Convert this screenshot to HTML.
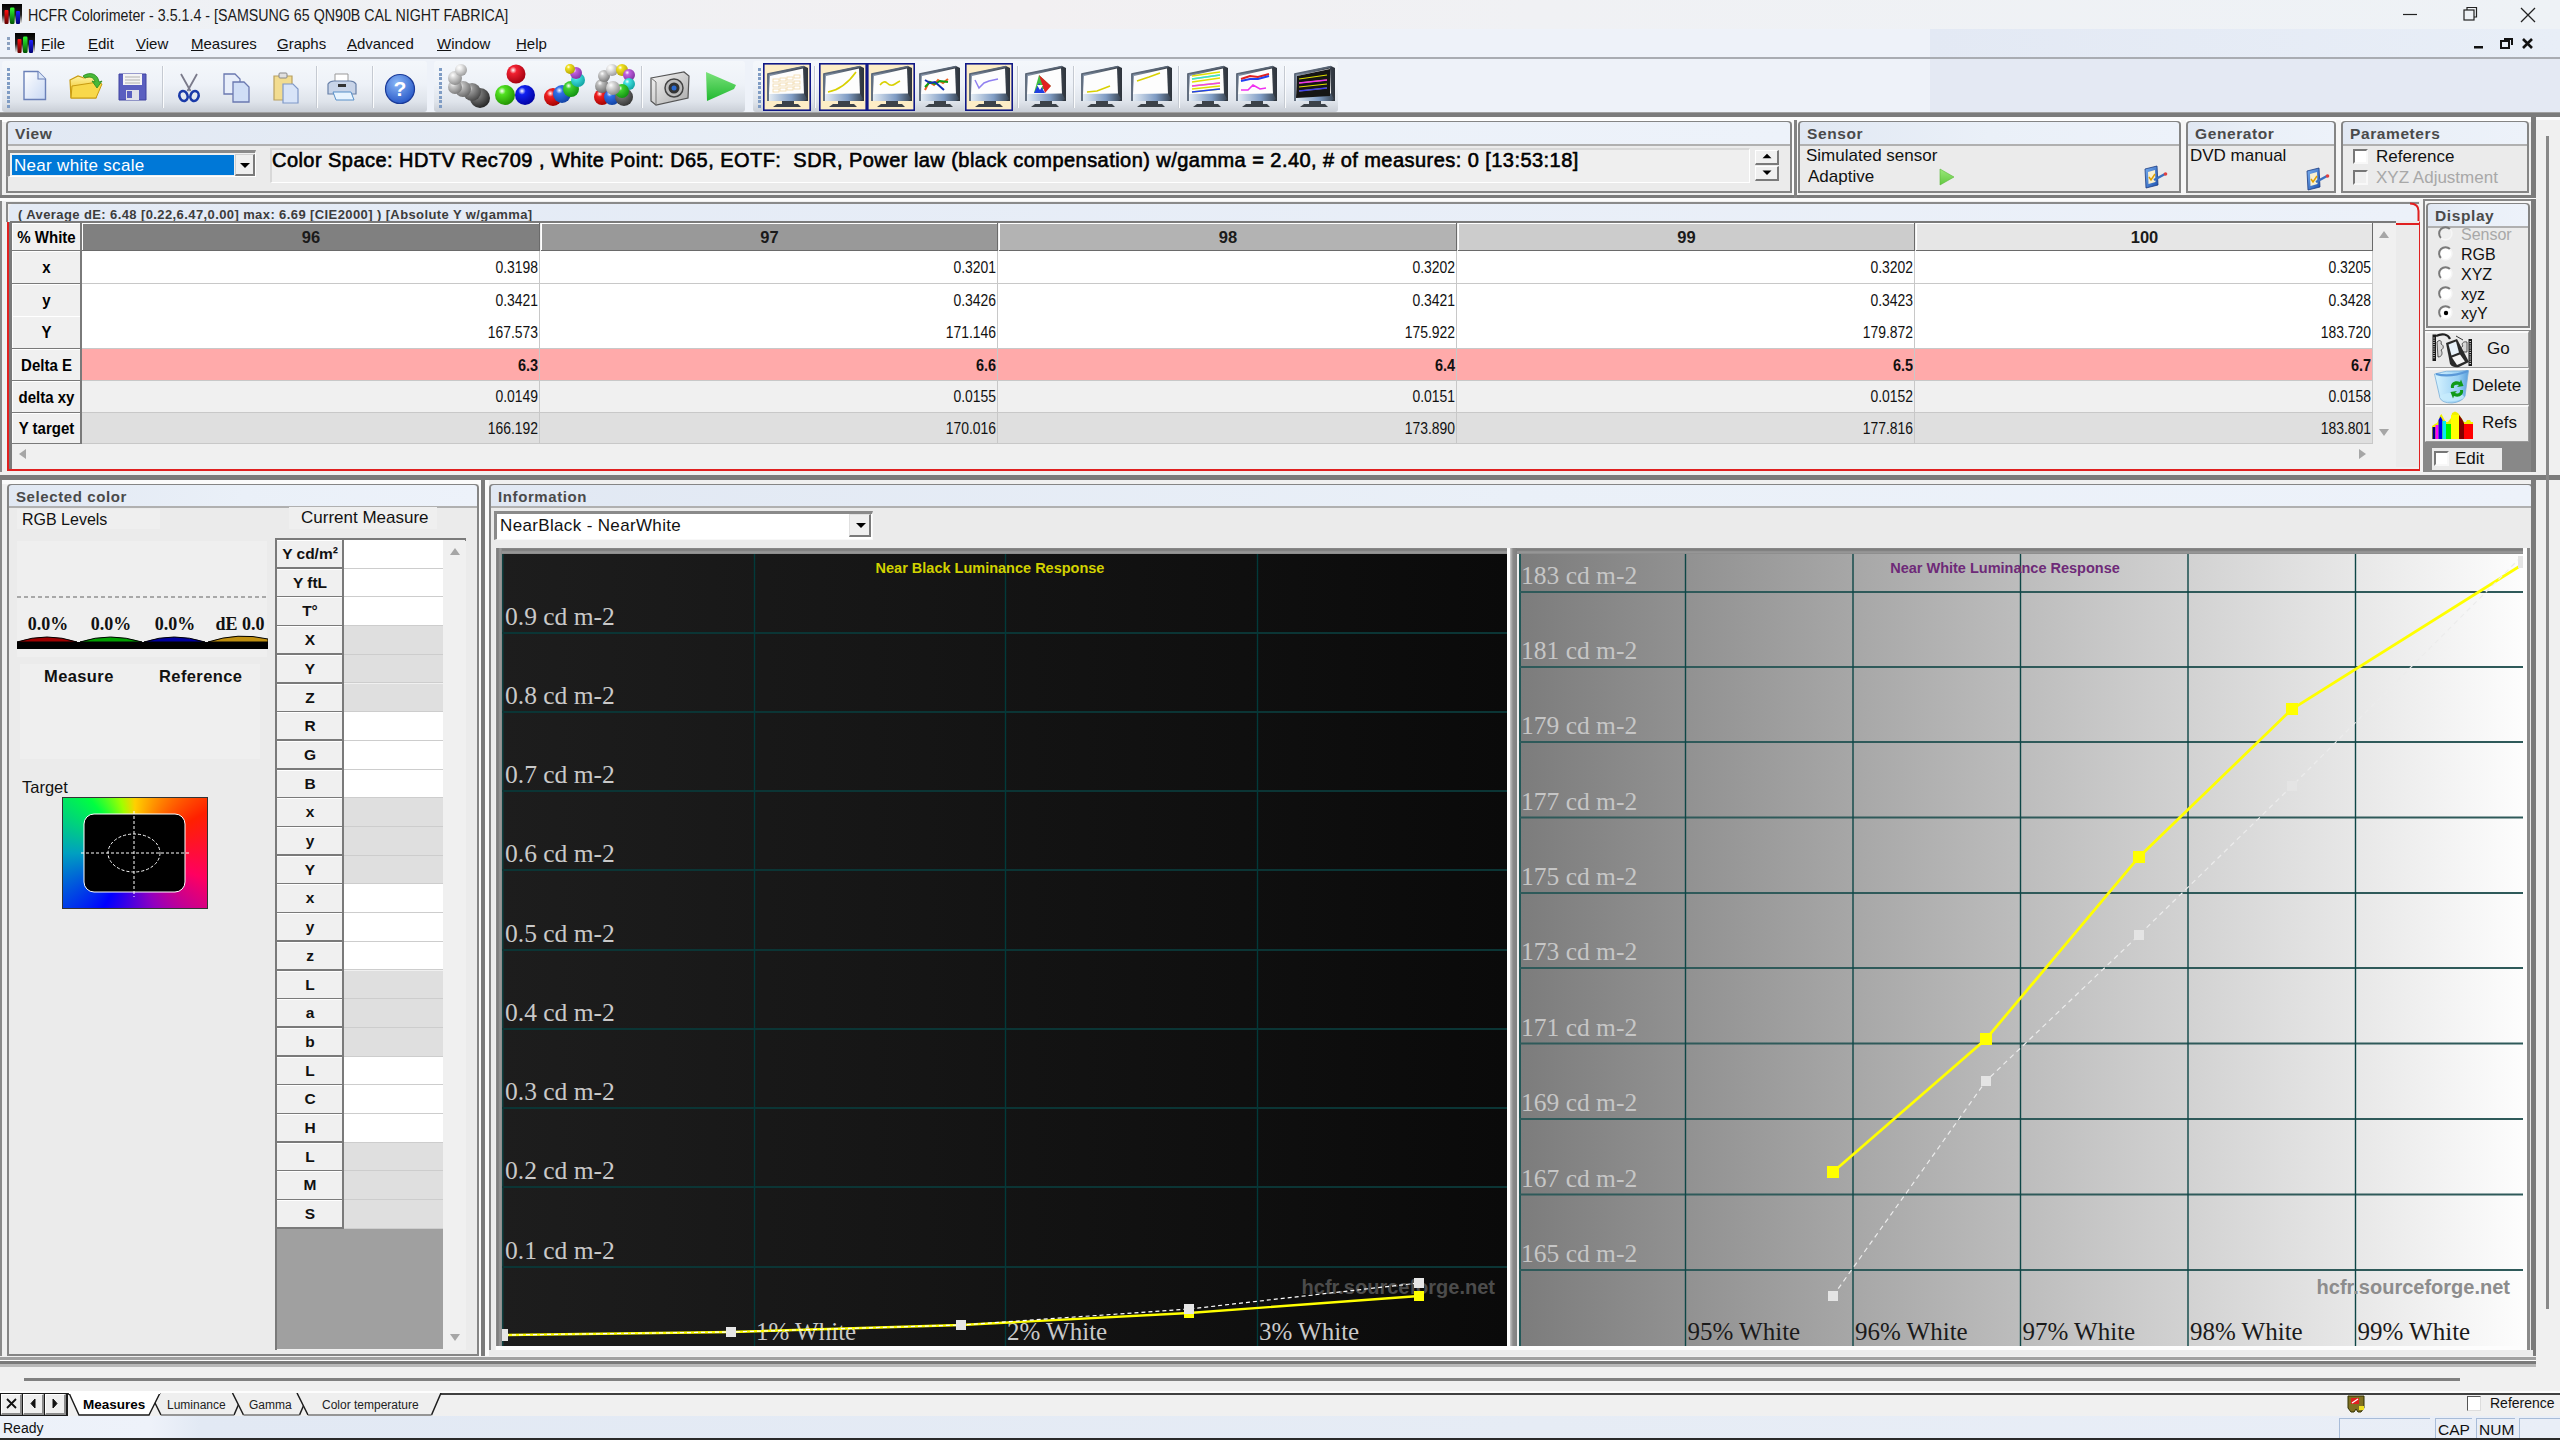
<!DOCTYPE html><html><head><meta charset="utf-8"><style>
html,body{margin:0;padding:0;width:2560px;height:1440px;overflow:hidden;background:#f0f0f0;}
body{position:relative;font-family:"Liberation Sans",sans-serif;}
div{position:absolute;box-sizing:border-box;}
.t{white-space:nowrap;line-height:1;}
.s{font-family:"Liberation Serif",serif;}
svg{position:absolute;}
</style></head><body>
<div style="left:0px;top:0px;width:2560px;height:29px;background:linear-gradient(90deg,#eef1f5 0%,#f2f0f2 40%,#f0f1f4 60%,#eef2f6 100%);"></div>
<div class="t" style="left:28px;top:8px;font-size:16px;color:#1a1a1a;transform:scaleX(0.89);transform-origin:0 0;">HCFR Colorimeter - 3.5.1.4 - [SAMSUNG 65 QN90B CAL NIGHT FABRICA]</div>
<svg style="left:2px;top:4px" width="20" height="20" viewBox="0 0 20 20"><defs><linearGradient id="ab2" x1="0" y1="0" x2="0" y2="1"><stop offset="0" stop-color="#000"/><stop offset="0.55" stop-color="#222"/><stop offset="1" stop-color="#fff"/></linearGradient><linearGradient id="ar2" x1="0" y1="0" x2="0" y2="1"><stop offset="0" stop-color="#ff1010"/><stop offset="1" stop-color="#600000"/></linearGradient><linearGradient id="agr2" x1="0" y1="0" x2="0" y2="1"><stop offset="0" stop-color="#30ff30"/><stop offset="1" stop-color="#005000"/></linearGradient><linearGradient id="abl2" x1="0" y1="0" x2="0" y2="1"><stop offset="0" stop-color="#2020ff"/><stop offset="1" stop-color="#000070"/></linearGradient></defs><rect x="0" y="0" width="20" height="20" fill="url(#ab2)"/><rect x="2.5" y="6" width="4" height="14" rx="1" fill="url(#ar2)"/><rect x="8" y="3.5" width="4.5" height="16.5" rx="1.2" fill="url(#agr2)"/><rect x="14" y="7" width="4" height="13" rx="1" fill="url(#abl2)"/></svg>
<svg style="left:2400px;top:6px" width="150" height="18"><line x1="3" y1="8.5" x2="17" y2="8.5" stroke="#222" stroke-width="1.2"/><rect x="64" y="4" width="10" height="10" fill="none" stroke="#222" stroke-width="1.2"/><path d="M67 4 V1.5 H76.5 V11 H74" fill="none" stroke="#222" stroke-width="1.2"/><path d="M121 2 L135 16 M135 2 L121 16" stroke="#222" stroke-width="1.3"/></svg>
<div style="left:0px;top:29px;width:2560px;height:28px;background:#eef2f9;"></div>
<div style="left:1930px;top:29px;width:630px;height:28px;background:linear-gradient(90deg,#e3e9f4,#e8eef7);"></div>
<div style="left:0px;top:57px;width:2560px;height:2px;background:#a9acb2;"></div>
<div style="left:7px;top:37px;width:3px;height:3px;background:#8aa0c0;"></div>
<div style="left:7px;top:42px;width:3px;height:3px;background:#8aa0c0;"></div>
<div style="left:7px;top:47px;width:3px;height:3px;background:#8aa0c0;"></div>
<svg style="left:15px;top:33px" width="20" height="20" viewBox="0 0 20 20"><defs><linearGradient id="ab15" x1="0" y1="0" x2="0" y2="1"><stop offset="0" stop-color="#000"/><stop offset="0.55" stop-color="#222"/><stop offset="1" stop-color="#fff"/></linearGradient><linearGradient id="ar15" x1="0" y1="0" x2="0" y2="1"><stop offset="0" stop-color="#ff1010"/><stop offset="1" stop-color="#600000"/></linearGradient><linearGradient id="agr15" x1="0" y1="0" x2="0" y2="1"><stop offset="0" stop-color="#30ff30"/><stop offset="1" stop-color="#005000"/></linearGradient><linearGradient id="abl15" x1="0" y1="0" x2="0" y2="1"><stop offset="0" stop-color="#2020ff"/><stop offset="1" stop-color="#000070"/></linearGradient></defs><rect x="0" y="0" width="20" height="20" fill="url(#ab15)"/><rect x="2.5" y="6" width="4" height="14" rx="1" fill="url(#ar15)"/><rect x="8" y="3.5" width="4.5" height="16.5" rx="1.2" fill="url(#agr15)"/><rect x="14" y="7" width="4" height="13" rx="1" fill="url(#abl15)"/></svg>
<div class="t" style="left:41px;top:36px;font-size:15px;color:#111;"><u>F</u>ile</div>
<div class="t" style="left:88px;top:36px;font-size:15px;color:#111;"><u>E</u>dit</div>
<div class="t" style="left:136px;top:36px;font-size:15px;color:#111;"><u>V</u>iew</div>
<div class="t" style="left:191px;top:36px;font-size:15px;color:#111;"><u>M</u>easures</div>
<div class="t" style="left:277px;top:36px;font-size:15px;color:#111;"><u>G</u>raphs</div>
<div class="t" style="left:347px;top:36px;font-size:15px;color:#111;"><u>A</u>dvanced</div>
<div class="t" style="left:437px;top:36px;font-size:15px;color:#111;"><u>W</u>indow</div>
<div class="t" style="left:516px;top:36px;font-size:15px;color:#111;"><u>H</u>elp</div>
<svg style="left:2468px;top:36px" width="70" height="16"><rect x="6" y="10" width="9" height="2.5" fill="#111"/><rect x="33" y="5" width="8" height="7" fill="none" stroke="#111" stroke-width="2"/><path d="M36 3 H44 V9" fill="none" stroke="#111" stroke-width="2"/><path d="M55 3 L64 12 M64 3 L55 12" stroke="#111" stroke-width="2.6"/></svg>
<div style="left:0px;top:59px;width:2560px;height:54px;background:linear-gradient(180deg,#f3f6fb 0%,#eef2f8 50%,#dde2ea 85%,#cfd4dc 100%);"></div>
<div style="left:1930px;top:59px;width:630px;height:54px;background:#e6ebf4;"></div>
<div style="left:0px;top:113px;width:2560px;height:4px;background:#7d7d7d;"></div>
<div style="left:0px;top:117px;width:2560px;height:3px;background:#fdfdfd;"></div>
<div style="left:0px;top:59px;width:2560px;height:54px;background:#eef2f9;"></div>
<div style="left:1930px;top:59px;width:630px;height:54px;background:#e4e9f3;"></div>
<div style="left:2px;top:61px;width:425px;height:51px;background:linear-gradient(180deg,#f4f7fb 0%,#eef2f8 45%,#dfe4eb 80%,#c9ced6 100%);border-radius:3px;"></div>
<div style="left:434px;top:61px;width:311px;height:51px;background:linear-gradient(180deg,#f4f7fb 0%,#eef2f8 45%,#dfe4eb 80%,#c9ced6 100%);border-radius:3px;"></div>
<div style="left:753px;top:61px;width:585px;height:51px;background:linear-gradient(180deg,#f4f7fb 0%,#eef2f8 45%,#dfe4eb 80%,#c9ced6 100%);border-radius:3px;"></div>
<div style="left:7px;top:68.0px;width:3px;height:3px;background:#7f9cc4;"></div>
<div style="left:7px;top:72.6px;width:3px;height:3px;background:#7f9cc4;"></div>
<div style="left:7px;top:77.2px;width:3px;height:3px;background:#7f9cc4;"></div>
<div style="left:7px;top:81.8px;width:3px;height:3px;background:#7f9cc4;"></div>
<div style="left:7px;top:86.4px;width:3px;height:3px;background:#7f9cc4;"></div>
<div style="left:7px;top:91.0px;width:3px;height:3px;background:#7f9cc4;"></div>
<div style="left:7px;top:95.6px;width:3px;height:3px;background:#7f9cc4;"></div>
<div style="left:7px;top:100.19999999999999px;width:3px;height:3px;background:#7f9cc4;"></div>
<div style="left:7px;top:104.8px;width:3px;height:3px;background:#7f9cc4;"></div>
<div style="left:439px;top:68.0px;width:3px;height:3px;background:#7f9cc4;"></div>
<div style="left:439px;top:72.6px;width:3px;height:3px;background:#7f9cc4;"></div>
<div style="left:439px;top:77.2px;width:3px;height:3px;background:#7f9cc4;"></div>
<div style="left:439px;top:81.8px;width:3px;height:3px;background:#7f9cc4;"></div>
<div style="left:439px;top:86.4px;width:3px;height:3px;background:#7f9cc4;"></div>
<div style="left:439px;top:91.0px;width:3px;height:3px;background:#7f9cc4;"></div>
<div style="left:439px;top:95.6px;width:3px;height:3px;background:#7f9cc4;"></div>
<div style="left:439px;top:100.19999999999999px;width:3px;height:3px;background:#7f9cc4;"></div>
<div style="left:439px;top:104.8px;width:3px;height:3px;background:#7f9cc4;"></div>
<div style="left:758px;top:68.0px;width:3px;height:3px;background:#7f9cc4;"></div>
<div style="left:758px;top:72.6px;width:3px;height:3px;background:#7f9cc4;"></div>
<div style="left:758px;top:77.2px;width:3px;height:3px;background:#7f9cc4;"></div>
<div style="left:758px;top:81.8px;width:3px;height:3px;background:#7f9cc4;"></div>
<div style="left:758px;top:86.4px;width:3px;height:3px;background:#7f9cc4;"></div>
<div style="left:758px;top:91.0px;width:3px;height:3px;background:#7f9cc4;"></div>
<div style="left:758px;top:95.6px;width:3px;height:3px;background:#7f9cc4;"></div>
<div style="left:758px;top:100.19999999999999px;width:3px;height:3px;background:#7f9cc4;"></div>
<div style="left:758px;top:104.8px;width:3px;height:3px;background:#7f9cc4;"></div>
<div style="left:162px;top:66px;width:1px;height:42px;background:#c5cad2;"></div>
<div style="left:163px;top:66px;width:1px;height:42px;background:#fbfcfd;"></div>
<div style="left:316px;top:66px;width:1px;height:42px;background:#c5cad2;"></div>
<div style="left:317px;top:66px;width:1px;height:42px;background:#fbfcfd;"></div>
<div style="left:372px;top:66px;width:1px;height:42px;background:#c5cad2;"></div>
<div style="left:373px;top:66px;width:1px;height:42px;background:#fbfcfd;"></div>
<div style="left:641px;top:66px;width:1px;height:42px;background:#c5cad2;"></div>
<div style="left:642px;top:66px;width:1px;height:42px;background:#fbfcfd;"></div>
<div style="left:814px;top:66px;width:1px;height:42px;background:#c5cad2;"></div>
<div style="left:815px;top:66px;width:1px;height:42px;background:#fbfcfd;"></div>
<div style="left:1017px;top:66px;width:1px;height:42px;background:#c5cad2;"></div>
<div style="left:1018px;top:66px;width:1px;height:42px;background:#fbfcfd;"></div>
<div style="left:1073px;top:66px;width:1px;height:42px;background:#c5cad2;"></div>
<div style="left:1074px;top:66px;width:1px;height:42px;background:#fbfcfd;"></div>
<div style="left:1178px;top:66px;width:1px;height:42px;background:#c5cad2;"></div>
<div style="left:1179px;top:66px;width:1px;height:42px;background:#fbfcfd;"></div>
<div style="left:1284px;top:66px;width:1px;height:42px;background:#c5cad2;"></div>
<div style="left:1285px;top:66px;width:1px;height:42px;background:#fbfcfd;"></div>
<div style="left:0px;top:112px;width:2560px;height:1px;background:#a0a0a0;"></div>
<div style="left:0px;top:113px;width:2560px;height:4px;background:#7b7b7b;"></div>
<div style="left:0px;top:117px;width:2560px;height:3px;background:#fcfcfc;"></div>
<svg style="left:22px;top:70px" width="26" height="32" viewBox="0 0 26 32"><defs><linearGradient id="nd" x1="0" y1="0" x2="1" y2="1"><stop offset="0" stop-color="#fff"/><stop offset="1" stop-color="#c8d8f4"/></linearGradient></defs><path d="M2 1.5 H16 L23.5 9 V29.5 H2 Z" fill="url(#nd)" stroke="#6a80b8" stroke-width="1.4"/><path d="M16 1.5 V9 H23.5" fill="#dde8f8" stroke="#6a80b8" stroke-width="1.1"/></svg>
<svg style="left:68px;top:72px" width="36" height="30" viewBox="0 0 36 30"><defs><linearGradient id="of" x1="0" y1="0" x2="0" y2="1"><stop offset="0" stop-color="#fff3a0"/><stop offset="1" stop-color="#e8b400"/></linearGradient></defs><path d="M2 8 L10 4 L16 6 L26 4 L30 10 L28 26 L3 26 Z" fill="url(#of)" stroke="#c89a10" stroke-width="1.2"/><path d="M4 14 L30 10 L34 12 L28 26 L3 26 Z" fill="#f8d84a" stroke="#c89a10" stroke-width="1"/><path d="M15 4 C22 -1 30 2 31 10 L34 9 L29 16 L24 9 L27 10 C26 5 21 4 17 6 Z" fill="#48b838" stroke="#2a8a20" stroke-width="0.8"/></svg>
<svg style="left:118px;top:72px" width="30" height="30" viewBox="0 0 30 30"><path d="M1 2 H28 V28 H1 Z" fill="#5a5fc0" stroke="#3e43a0" stroke-width="1"/><rect x="5" y="2" width="19" height="11" fill="#f4f4f4"/><path d="M7 5 H22 M7 8 H22 M7 11 H22" stroke="#b0b0b0" stroke-width="1"/><rect x="8" y="18" width="13" height="10" fill="#e0e0e8"/><rect x="9" y="19" width="5" height="7" fill="#5a5fc0"/></svg>
<svg style="left:175px;top:73px" width="28" height="30" viewBox="0 0 28 30"><path d="M6 1 L15.5 18 M22 1 L12.5 18" stroke="#7a7a8a" stroke-width="1.8"/><ellipse cx="8.5" cy="23" rx="4" ry="5" fill="none" stroke="#1a3aa8" stroke-width="2.6" transform="rotate(-20 8.5 23)"/><ellipse cx="19.5" cy="23" rx="4" ry="5" fill="none" stroke="#1a3aa8" stroke-width="2.6" transform="rotate(20 19.5 23)"/></svg>
<svg style="left:222px;top:72px" width="30" height="32" viewBox="0 0 30 32"><path d="M2 2 H13 L18 7 V22 H2 Z" fill="#e8eefa" stroke="#6a78b0" stroke-width="1.3"/><path d="M11 10 H22 L27 15 V30 H11 Z" fill="#d0def6" stroke="#6a78b0" stroke-width="1.3"/></svg>
<svg style="left:271px;top:72px" width="30" height="32" viewBox="0 0 30 32"><path d="M3 4 H21 V28 H3 Z" fill="#f2dc90" stroke="#b8a060" stroke-width="1.2"/><rect x="8" y="1" width="8" height="5" rx="1" fill="#e0e0e0" stroke="#888" stroke-width="1"/><path d="M12 12 H22 L27 17 V31 H12 Z" fill="#d8e4f8" stroke="#7f98c8" stroke-width="1.2"/></svg>
<svg style="left:326px;top:72px" width="32" height="30" viewBox="0 0 32 30"><path d="M9 2 H22 V10 H9 Z" fill="#fff" stroke="#999" stroke-width="1"/><path d="M2 12 Q4 9 8 9 H24 Q28 9 30 12 V22 H2 Z" fill="#c8d4e8" stroke="#6880a8" stroke-width="1.2"/><rect x="12" y="12" width="8" height="3" fill="#333"/><path d="M7 20 H25 L28 28 H10 Z" fill="#e8f4ff" stroke="#5890c8" stroke-width="1"/></svg>
<svg style="left:384px;top:73px" width="32" height="32" viewBox="0 0 32 32"><defs><radialGradient id="hp" cx="0.4" cy="0.3" r="0.7"><stop offset="0" stop-color="#8ab8f8"/><stop offset="1" stop-color="#2a5ac8"/></radialGradient></defs><circle cx="16" cy="16" r="14.5" fill="url(#hp)" stroke="#1a3a98" stroke-width="1.2"/><text x="16" y="23" font-family="Liberation Sans" font-weight="bold" font-size="21" fill="#fff" text-anchor="middle">?</text></svg>
<svg style="left:445px;top:64px" width="48" height="46" viewBox="0 0 48 46"><defs><radialGradient id="g1" cx="0.35" cy="0.3" r="0.75"><stop offset="0" stop-color="#fff"/><stop offset="0.25" stop-color="#777"/><stop offset="1" stop-color="#222"/></radialGradient></defs><circle cx="35" cy="34" r="10" fill="url(#g1)"/><defs><radialGradient id="g2" cx="0.35" cy="0.3" r="0.75"><stop offset="0" stop-color="#fff"/><stop offset="0.25" stop-color="#999"/><stop offset="1" stop-color="#444"/></radialGradient></defs><circle cx="27" cy="28" r="9" fill="url(#g2)"/><defs><radialGradient id="g3" cx="0.35" cy="0.3" r="0.75"><stop offset="0" stop-color="#fff"/><stop offset="0.25" stop-color="#bbb"/><stop offset="1" stop-color="#666"/></radialGradient></defs><circle cx="18" cy="25" r="8" fill="url(#g3)"/><defs><radialGradient id="g4" cx="0.35" cy="0.3" r="0.75"><stop offset="0" stop-color="#fff"/><stop offset="0.25" stop-color="#ccc"/><stop offset="1" stop-color="#777"/></radialGradient></defs><circle cx="10" cy="23" r="7" fill="url(#g4)"/><defs><radialGradient id="g5" cx="0.35" cy="0.3" r="0.75"><stop offset="0" stop-color="#fff"/><stop offset="0.25" stop-color="#ddd"/><stop offset="1" stop-color="#888"/></radialGradient></defs><circle cx="10" cy="14" r="7" fill="url(#g5)"/><defs><radialGradient id="g6" cx="0.35" cy="0.3" r="0.75"><stop offset="0" stop-color="#fff"/><stop offset="0.25" stop-color="#eee"/><stop offset="1" stop-color="#999"/></radialGradient></defs><circle cx="16" cy="6" r="6" fill="url(#g6)"/></svg>
<svg style="left:494px;top:64px" width="44" height="46" viewBox="0 0 44 46"><defs><radialGradient id="r1" cx="0.35" cy="0.3" r="0.75"><stop offset="0" stop-color="#fff"/><stop offset="0.25" stop-color="#f02030"/><stop offset="1" stop-color="#a00010"/></radialGradient></defs><circle cx="22" cy="10" r="9.5" fill="url(#r1)"/><defs><radialGradient id="gr1" cx="0.35" cy="0.3" r="0.75"><stop offset="0" stop-color="#fff"/><stop offset="0.25" stop-color="#50e020"/><stop offset="1" stop-color="#209000"/></radialGradient></defs><circle cx="11" cy="31" r="10" fill="url(#gr1)"/><defs><radialGradient id="b1" cx="0.35" cy="0.3" r="0.75"><stop offset="0" stop-color="#fff"/><stop offset="0.25" stop-color="#1020f0"/><stop offset="1" stop-color="#0000a0"/></radialGradient></defs><circle cx="31" cy="31" r="10" fill="url(#b1)"/></svg>
<svg style="left:543px;top:64px" width="44" height="46" viewBox="0 0 44 46"><defs><radialGradient id="c1" cx="0.35" cy="0.3" r="0.75"><stop offset="0" stop-color="#fff"/><stop offset="0.25" stop-color="#f02020"/><stop offset="1" stop-color="#a00000"/></radialGradient></defs><circle cx="10" cy="33" r="9" fill="url(#c1)"/><defs><radialGradient id="c2" cx="0.35" cy="0.3" r="0.75"><stop offset="0" stop-color="#fff"/><stop offset="0.25" stop-color="#3070e8"/><stop offset="1" stop-color="#1040a0"/></radialGradient></defs><circle cx="19" cy="30" r="9" fill="url(#c2)"/><defs><radialGradient id="c3" cx="0.35" cy="0.3" r="0.75"><stop offset="0" stop-color="#fff"/><stop offset="0.25" stop-color="#40d030"/><stop offset="1" stop-color="#109010"/></radialGradient></defs><circle cx="28" cy="25" r="8" fill="url(#c3)"/><defs><radialGradient id="c4" cx="0.35" cy="0.3" r="0.75"><stop offset="0" stop-color="#fff"/><stop offset="0.25" stop-color="#40e0e0"/><stop offset="1" stop-color="#10a0a0"/></radialGradient></defs><circle cx="35" cy="16" r="7" fill="url(#c4)"/><defs><radialGradient id="c5" cx="0.35" cy="0.3" r="0.75"><stop offset="0" stop-color="#fff"/><stop offset="0.25" stop-color="#c060e0"/><stop offset="1" stop-color="#8030a0"/></radialGradient></defs><circle cx="33" cy="9" r="6" fill="url(#c5)"/><defs><radialGradient id="c6" cx="0.35" cy="0.3" r="0.75"><stop offset="0" stop-color="#fff"/><stop offset="0.25" stop-color="#f0e020"/><stop offset="1" stop-color="#b0a000"/></radialGradient></defs><circle cx="27" cy="5" r="5" fill="url(#c6)"/></svg>
<svg style="left:592px;top:64px" width="46" height="46" viewBox="0 0 46 46"><defs><radialGradient id="d1" cx="0.35" cy="0.3" r="0.75"><stop offset="0" stop-color="#fff"/><stop offset="0.25" stop-color="#f02020"/><stop offset="1" stop-color="#a00000"/></radialGradient></defs><circle cx="10" cy="33" r="8" fill="url(#d1)"/><defs><radialGradient id="d2" cx="0.35" cy="0.3" r="0.75"><stop offset="0" stop-color="#fff"/><stop offset="0.25" stop-color="#3070e8"/><stop offset="1" stop-color="#1040a0"/></radialGradient></defs><circle cx="20" cy="33" r="8" fill="url(#d2)"/><defs><radialGradient id="d3" cx="0.35" cy="0.3" r="0.75"><stop offset="0" stop-color="#fff"/><stop offset="0.25" stop-color="#777"/><stop offset="1" stop-color="#333"/></radialGradient></defs><circle cx="32" cy="33" r="9" fill="url(#d3)"/><defs><radialGradient id="d4" cx="0.35" cy="0.3" r="0.75"><stop offset="0" stop-color="#fff"/><stop offset="0.25" stop-color="#bbb"/><stop offset="1" stop-color="#666"/></radialGradient></defs><circle cx="10" cy="22" r="7" fill="url(#d4)"/><defs><radialGradient id="d5" cx="0.35" cy="0.3" r="0.75"><stop offset="0" stop-color="#fff"/><stop offset="0.25" stop-color="#ccc"/><stop offset="1" stop-color="#777"/></radialGradient></defs><circle cx="12" cy="12" r="6" fill="url(#d5)"/><defs><radialGradient id="d6" cx="0.35" cy="0.3" r="0.75"><stop offset="0" stop-color="#fff"/><stop offset="0.25" stop-color="#eee"/><stop offset="1" stop-color="#999"/></radialGradient></defs><circle cx="20" cy="6" r="6" fill="url(#d6)"/><defs><radialGradient id="d7" cx="0.35" cy="0.3" r="0.75"><stop offset="0" stop-color="#fff"/><stop offset="0.25" stop-color="#f0e020"/><stop offset="1" stop-color="#b0a000"/></radialGradient></defs><circle cx="30" cy="6" r="6" fill="url(#d7)"/><defs><radialGradient id="d8" cx="0.35" cy="0.3" r="0.75"><stop offset="0" stop-color="#fff"/><stop offset="0.25" stop-color="#c060e0"/><stop offset="1" stop-color="#8030a0"/></radialGradient></defs><circle cx="37" cy="11" r="6" fill="url(#d8)"/><defs><radialGradient id="d9" cx="0.35" cy="0.3" r="0.75"><stop offset="0" stop-color="#fff"/><stop offset="0.25" stop-color="#40e0e0"/><stop offset="1" stop-color="#10a0a0"/></radialGradient></defs><circle cx="37" cy="20" r="6" fill="url(#d9)"/><defs><radialGradient id="d10" cx="0.35" cy="0.3" r="0.75"><stop offset="0" stop-color="#fff"/><stop offset="0.25" stop-color="#40d030"/><stop offset="1" stop-color="#109010"/></radialGradient></defs><circle cx="30" cy="27" r="7" fill="url(#d10)"/><defs><radialGradient id="d11" cx="0.35" cy="0.3" r="0.75"><stop offset="0" stop-color="#fff"/><stop offset="0.25" stop-color="#ddd"/><stop offset="1" stop-color="#888"/></radialGradient></defs><circle cx="21" cy="24" r="7" fill="url(#d11)"/></svg>
<svg style="left:648px;top:66px" width="44" height="42" viewBox="0 0 44 42"><defs><linearGradient id="cam" x1="0" y1="0" x2="1" y2="1"><stop offset="0" stop-color="#f8f8f8"/><stop offset="1" stop-color="#a8a8a8"/></linearGradient></defs><path d="M3 12 L36 6 L41 10 L40 32 L8 39 L3 35 Z" fill="url(#cam)" stroke="#555" stroke-width="1.2"/><path d="M3 12 L8 16 L8 39" fill="none" stroke="#777" stroke-width="1"/><circle cx="26" cy="22" r="9" fill="#bbb" stroke="#444" stroke-width="1.5"/><circle cx="26" cy="22" r="5.5" fill="#333"/><circle cx="26" cy="22" r="2.5" fill="#2a6ad0"/></svg>
<svg style="left:704px;top:70px" width="34" height="34" viewBox="0 0 34 34"><defs><linearGradient id="pl" x1="0" y1="0" x2="0" y2="1"><stop offset="0" stop-color="#7ae27a"/><stop offset="1" stop-color="#20b830"/></linearGradient></defs><path d="M2 2 L32 15 L30 19 L3 31 Z" fill="url(#pl)"/></svg>
<svg style="left:763px;top:63px" width="48" height="48" viewBox="0 0 48 48"><rect x="0.8" y="0.8" width="46.4" height="46.4" fill="#fdedc6" stroke="#101888" stroke-width="1.6"/><defs><linearGradient id="mba" x1="0" y1="0" x2="1" y2="0"><stop offset="0" stop-color="#e4ecf4"/><stop offset="0.6" stop-color="#7f9cc4"/><stop offset="1" stop-color="#3a4654"/></linearGradient><linearGradient id="msa" x1="0" y1="0" x2="1" y2="0"><stop offset="0" stop-color="#8a9ab0"/><stop offset="1" stop-color="#2e343c"/></linearGradient></defs><path d="M4 38 L4 11 L41 3 L45 5 L45 38 Z" fill="url(#msa)"/><path d="M7 13 L40 5.5 L41 31 L6 31 Z" fill="#fdfdfd"/><path d="M5 38 L5 11 L41 3.5" fill="none" stroke="#5a6676" stroke-width="1.6"/><path d="M6 31 L41 30.5 L44 36 L41 38 L6 38 Z" fill="url(#mba)"/><rect x="19" y="38" width="12" height="3" fill="#3c4249"/><path d="M10 44 L14 41 L35 41 L38 44 Z" fill="#3c4249"/><g fill="#fff" stroke="#f0d8a8" stroke-width="0.8"><rect x="10" y="16" width="6" height="3"/><rect x="17" y="15" width="6" height="3"/><rect x="24" y="14" width="6" height="3"/><rect x="31" y="12" width="6" height="3"/><rect x="10" y="21" width="6" height="3"/><rect x="17" y="20" width="6" height="3"/><rect x="24" y="19" width="6" height="3"/><rect x="31" y="18" width="6" height="3"/><rect x="10" y="26" width="6" height="3"/><rect x="17" y="25" width="6" height="3"/><rect x="24" y="24" width="6" height="3"/><rect x="31" y="23" width="6" height="3"/></g></svg>
<svg style="left:819px;top:63px" width="48" height="48" viewBox="0 0 48 48"><rect x="0.8" y="0.8" width="46.4" height="46.4" fill="#fdedc6" stroke="#101888" stroke-width="1.6"/><defs><linearGradient id="mbb" x1="0" y1="0" x2="1" y2="0"><stop offset="0" stop-color="#e4ecf4"/><stop offset="0.6" stop-color="#7f9cc4"/><stop offset="1" stop-color="#3a4654"/></linearGradient><linearGradient id="msb" x1="0" y1="0" x2="1" y2="0"><stop offset="0" stop-color="#8a9ab0"/><stop offset="1" stop-color="#2e343c"/></linearGradient></defs><path d="M4 38 L4 11 L41 3 L45 5 L45 38 Z" fill="url(#msb)"/><path d="M7 13 L40 5.5 L41 31 L6 31 Z" fill="#fdfdfd"/><path d="M5 38 L5 11 L41 3.5" fill="none" stroke="#5a6676" stroke-width="1.6"/><path d="M6 31 L41 30.5 L44 36 L41 38 L6 38 Z" fill="url(#mbb)"/><rect x="19" y="38" width="12" height="3" fill="#3c4249"/><path d="M10 44 L14 41 L35 41 L38 44 Z" fill="#3c4249"/><path d="M9 29 Q25 26 37 9" fill="none" stroke="#d8d000" stroke-width="1.6"/></svg>
<svg style="left:867px;top:63px" width="48" height="48" viewBox="0 0 48 48"><rect x="0.8" y="0.8" width="46.4" height="46.4" fill="#fdedc6" stroke="#101888" stroke-width="1.6"/><defs><linearGradient id="mbc" x1="0" y1="0" x2="1" y2="0"><stop offset="0" stop-color="#e4ecf4"/><stop offset="0.6" stop-color="#7f9cc4"/><stop offset="1" stop-color="#3a4654"/></linearGradient><linearGradient id="msc" x1="0" y1="0" x2="1" y2="0"><stop offset="0" stop-color="#8a9ab0"/><stop offset="1" stop-color="#2e343c"/></linearGradient></defs><path d="M4 38 L4 11 L41 3 L45 5 L45 38 Z" fill="url(#msc)"/><path d="M7 13 L40 5.5 L41 31 L6 31 Z" fill="#fdfdfd"/><path d="M5 38 L5 11 L41 3.5" fill="none" stroke="#5a6676" stroke-width="1.6"/><path d="M6 31 L41 30.5 L44 36 L41 38 L6 38 Z" fill="url(#mbc)"/><rect x="19" y="38" width="12" height="3" fill="#3c4249"/><path d="M10 44 L14 41 L35 41 L38 44 Z" fill="#3c4249"/><path d="M13 22 Q17 17 20 20 Q24 24 28 21 Q31 19 33 18" fill="none" stroke="#d8d000" stroke-width="1.6"/></svg>
<svg style="left:915px;top:63px" width="48" height="48" viewBox="0 0 48 48"><defs><linearGradient id="mbd" x1="0" y1="0" x2="1" y2="0"><stop offset="0" stop-color="#e4ecf4"/><stop offset="0.6" stop-color="#7f9cc4"/><stop offset="1" stop-color="#3a4654"/></linearGradient><linearGradient id="msd" x1="0" y1="0" x2="1" y2="0"><stop offset="0" stop-color="#8a9ab0"/><stop offset="1" stop-color="#2e343c"/></linearGradient></defs><path d="M4 38 L4 11 L41 3 L45 5 L45 38 Z" fill="url(#msd)"/><path d="M7 13 L40 5.5 L41 31 L6 31 Z" fill="#fdfdfd"/><path d="M5 38 L5 11 L41 3.5" fill="none" stroke="#5a6676" stroke-width="1.6"/><path d="M6 31 L41 30.5 L44 36 L41 38 L6 38 Z" fill="url(#mbd)"/><rect x="19" y="38" width="12" height="3" fill="#3c4249"/><path d="M10 44 L14 41 L35 41 L38 44 Z" fill="#3c4249"/><path d="M10 27 L14 19 L19 22 L23 17 L28 20 L33 16" fill="none" stroke="#f06020" stroke-width="2"/><path d="M10 24 L15 19 L20 21 L25 18 L33 19" fill="none" stroke="#10a010" stroke-width="2"/><path d="M10 17 L15 20 L20 19 L29 27" fill="none" stroke="#1030b0" stroke-width="2"/></svg>
<svg style="left:965px;top:63px" width="48" height="48" viewBox="0 0 48 48"><rect x="0.8" y="0.8" width="46.4" height="46.4" fill="#fdedc6" stroke="#101888" stroke-width="1.6"/><defs><linearGradient id="mbe" x1="0" y1="0" x2="1" y2="0"><stop offset="0" stop-color="#e4ecf4"/><stop offset="0.6" stop-color="#7f9cc4"/><stop offset="1" stop-color="#3a4654"/></linearGradient><linearGradient id="mse" x1="0" y1="0" x2="1" y2="0"><stop offset="0" stop-color="#8a9ab0"/><stop offset="1" stop-color="#2e343c"/></linearGradient></defs><path d="M4 38 L4 11 L41 3 L45 5 L45 38 Z" fill="url(#mse)"/><path d="M7 13 L40 5.5 L41 31 L6 31 Z" fill="#fdfdfd"/><path d="M5 38 L5 11 L41 3.5" fill="none" stroke="#5a6676" stroke-width="1.6"/><path d="M6 31 L41 30.5 L44 36 L41 38 L6 38 Z" fill="url(#mbe)"/><rect x="19" y="38" width="12" height="3" fill="#3c4249"/><path d="M10 44 L14 41 L35 41 L38 44 Z" fill="#3c4249"/><path d="M10 17 L14 25 L19 20 L24 18 L33 16" fill="none" stroke="#9080f0" stroke-width="1.5"/></svg>
<svg style="left:1021px;top:63px" width="48" height="48" viewBox="0 0 48 48"><defs><linearGradient id="mbf" x1="0" y1="0" x2="1" y2="0"><stop offset="0" stop-color="#e4ecf4"/><stop offset="0.6" stop-color="#7f9cc4"/><stop offset="1" stop-color="#3a4654"/></linearGradient><linearGradient id="msf" x1="0" y1="0" x2="1" y2="0"><stop offset="0" stop-color="#8a9ab0"/><stop offset="1" stop-color="#2e343c"/></linearGradient></defs><path d="M4 38 L4 11 L41 3 L45 5 L45 38 Z" fill="url(#msf)"/><path d="M7 13 L40 5.5 L41 31 L6 31 Z" fill="#fdfdfd"/><path d="M5 38 L5 11 L41 3.5" fill="none" stroke="#5a6676" stroke-width="1.6"/><path d="M6 31 L41 30.5 L44 36 L41 38 L6 38 Z" fill="url(#mbf)"/><rect x="19" y="38" width="12" height="3" fill="#3c4249"/><path d="M10 44 L14 41 L35 41 L38 44 Z" fill="#3c4249"/><path d="M13 30 L18 12 L30 23 Z" fill="#40c040"/><path d="M18 12 L30 23 L24 30 Z" fill="#e02020"/><path d="M13 30 L24 30 L18 20 Z" fill="#2040e0"/><path d="M16 22 L22 22 L19 27Z" fill="#fff"/></svg>
<svg style="left:1077px;top:63px" width="48" height="48" viewBox="0 0 48 48"><defs><linearGradient id="mbg" x1="0" y1="0" x2="1" y2="0"><stop offset="0" stop-color="#e4ecf4"/><stop offset="0.6" stop-color="#7f9cc4"/><stop offset="1" stop-color="#3a4654"/></linearGradient><linearGradient id="msg" x1="0" y1="0" x2="1" y2="0"><stop offset="0" stop-color="#8a9ab0"/><stop offset="1" stop-color="#2e343c"/></linearGradient></defs><path d="M4 38 L4 11 L41 3 L45 5 L45 38 Z" fill="url(#msg)"/><path d="M7 13 L40 5.5 L41 31 L6 31 Z" fill="#fdfdfd"/><path d="M5 38 L5 11 L41 3.5" fill="none" stroke="#5a6676" stroke-width="1.6"/><path d="M6 31 L41 30.5 L44 36 L41 38 L6 38 Z" fill="url(#mbg)"/><rect x="19" y="38" width="12" height="3" fill="#3c4249"/><path d="M10 44 L14 41 L35 41 L38 44 Z" fill="#3c4249"/><path d="M10 29 L20 28 L33 23" fill="none" stroke="#d8d000" stroke-width="1.6"/></svg>
<svg style="left:1127px;top:63px" width="48" height="48" viewBox="0 0 48 48"><defs><linearGradient id="mbh" x1="0" y1="0" x2="1" y2="0"><stop offset="0" stop-color="#e4ecf4"/><stop offset="0.6" stop-color="#7f9cc4"/><stop offset="1" stop-color="#3a4654"/></linearGradient><linearGradient id="msh" x1="0" y1="0" x2="1" y2="0"><stop offset="0" stop-color="#8a9ab0"/><stop offset="1" stop-color="#2e343c"/></linearGradient></defs><path d="M4 38 L4 11 L41 3 L45 5 L45 38 Z" fill="url(#msh)"/><path d="M7 13 L40 5.5 L41 31 L6 31 Z" fill="#fdfdfd"/><path d="M5 38 L5 11 L41 3.5" fill="none" stroke="#5a6676" stroke-width="1.6"/><path d="M6 31 L41 30.5 L44 36 L41 38 L6 38 Z" fill="url(#mbh)"/><rect x="19" y="38" width="12" height="3" fill="#3c4249"/><path d="M10 44 L14 41 L35 41 L38 44 Z" fill="#3c4249"/><path d="M10 18 L22 14 L33 10" fill="none" stroke="#d8d000" stroke-width="1.6"/></svg>
<svg style="left:1183px;top:63px" width="48" height="48" viewBox="0 0 48 48"><defs><linearGradient id="mbi" x1="0" y1="0" x2="1" y2="0"><stop offset="0" stop-color="#e4ecf4"/><stop offset="0.6" stop-color="#7f9cc4"/><stop offset="1" stop-color="#3a4654"/></linearGradient><linearGradient id="msi" x1="0" y1="0" x2="1" y2="0"><stop offset="0" stop-color="#8a9ab0"/><stop offset="1" stop-color="#2e343c"/></linearGradient></defs><path d="M4 38 L4 11 L41 3 L45 5 L45 38 Z" fill="url(#msi)"/><path d="M7 13 L40 5.5 L41 31 L6 31 Z" fill="#fdfdfd"/><path d="M5 38 L5 11 L41 3.5" fill="none" stroke="#5a6676" stroke-width="1.6"/><path d="M6 31 L41 30.5 L44 36 L41 38 L6 38 Z" fill="url(#mbi)"/><rect x="19" y="38" width="12" height="3" fill="#3c4249"/><path d="M10 44 L14 41 L35 41 L38 44 Z" fill="#3c4249"/><path d="M9 13 L37 9 M9 16 L37 12 M9 19 L37 15 M9 23 L37 20 M9 26 L37 23 M9 29 L37 26" stroke-width="1.5" fill="none" stroke="#e0e000"/><path d="M9 16 L37 12" stroke="#30e0e0" stroke-width="1.5"/><path d="M9 23 L37 20" stroke="#f040f0" stroke-width="1.5"/><path d="M9 29 L37 26" stroke="#2040f0" stroke-width="1.5"/></svg>
<svg style="left:1232px;top:63px" width="48" height="48" viewBox="0 0 48 48"><defs><linearGradient id="mbj" x1="0" y1="0" x2="1" y2="0"><stop offset="0" stop-color="#e4ecf4"/><stop offset="0.6" stop-color="#7f9cc4"/><stop offset="1" stop-color="#3a4654"/></linearGradient><linearGradient id="msj" x1="0" y1="0" x2="1" y2="0"><stop offset="0" stop-color="#8a9ab0"/><stop offset="1" stop-color="#2e343c"/></linearGradient></defs><path d="M4 38 L4 11 L41 3 L45 5 L45 38 Z" fill="url(#msj)"/><path d="M7 13 L40 5.5 L41 31 L6 31 Z" fill="#fdfdfd"/><path d="M5 38 L5 11 L41 3.5" fill="none" stroke="#5a6676" stroke-width="1.6"/><path d="M6 31 L41 30.5 L44 36 L41 38 L6 38 Z" fill="url(#mbj)"/><rect x="19" y="38" width="12" height="3" fill="#3c4249"/><path d="M10 44 L14 41 L35 41 L38 44 Z" fill="#3c4249"/><path d="M9 16 L18 13 L26 14 L37 11" stroke="#e02020" stroke-width="2" fill="none"/><path d="M9 18 L18 16 L26 16 L37 13" stroke="#2040f0" stroke-width="2" fill="none"/><path d="M9 27 L16 27 L21 22 L28 26 L34 25" stroke="#f030f0" stroke-width="1.6" fill="none"/></svg>
<svg style="left:1290px;top:63px" width="48" height="48" viewBox="0 0 48 48"><defs><linearGradient id="mbk" x1="0" y1="0" x2="1" y2="0"><stop offset="0" stop-color="#e4ecf4"/><stop offset="0.6" stop-color="#7f9cc4"/><stop offset="1" stop-color="#3a4654"/></linearGradient><linearGradient id="msk" x1="0" y1="0" x2="1" y2="0"><stop offset="0" stop-color="#8a9ab0"/><stop offset="1" stop-color="#2e343c"/></linearGradient></defs><path d="M4 38 L4 11 L41 3 L45 5 L45 38 Z" fill="url(#msk)"/><path d="M7 13 L40 5.5 L41 31 L6 31 Z" fill="#fdfdfd"/><path d="M5 38 L5 11 L41 3.5" fill="none" stroke="#5a6676" stroke-width="1.6"/><path d="M6 31 L41 30.5 L44 36 L41 38 L6 38 Z" fill="url(#mbk)"/><rect x="19" y="38" width="12" height="3" fill="#3c4249"/><path d="M10 44 L14 41 L35 41 L38 44 Z" fill="#3c4249"/><path d="M7 13 L40 6 L40 33 L6 35 Z" fill="#151515"/><path d="M9 16 L37 12 M9 20 L37 17 M9 24 L37 21 M9 28 L37 25" stroke="#e0e000" stroke-width="1.2"/><path d="M9 20 L37 17" stroke="#f030f0" stroke-width="1.4"/><path d="M9 28 L37 25" stroke="#4040f0" stroke-width="1.4"/></svg>
<div style="left:0px;top:120px;width:2560px;height:79px;background:#f0f0f0;"></div>
<div style="left:0px;top:120px;width:2px;height:79px;background:#8a8a8a;"></div>
<div style="left:2px;top:120px;width:2534px;height:2px;background:#fff;"></div>
<div style="left:2531px;top:117px;width:5px;height:82px;background:#7b7b7b;"></div>
<div style="left:0px;top:195px;width:2536px;height:3px;background:#7b7b7b;"></div>
<div style="left:0px;top:198px;width:2536px;height:3px;background:#fcfcfc;"></div>
<div style="left:6px;top:121px;width:1786px;height:72px;background:#ebebeb;border:2px solid #858585;border-top-left-radius:4px;border-top-right-radius:4px;"></div>
<div style="left:8px;top:122px;width:1782px;height:22px;background:linear-gradient(90deg,#e1e8f3,#eaf0f8 50%,#edf2fa);border-top-left-radius:3px;border-top-right-radius:3px;"></div>
<div style="left:8px;top:144px;width:1782px;height:2px;background:#b0b0b0;"></div>
<div class="t" style="left:15px;top:126px;font-size:15.5px;font-weight:bold;color:#4a4a4a;letter-spacing:0.6px;">View</div>
<div style="left:1792px;top:120px;width:2px;height:75px;background:#fcfcfc;"></div>
<div style="left:1794px;top:120px;width:3px;height:78px;background:#838383;"></div>
<div style="left:1797px;top:120px;width:2px;height:75px;background:#fcfcfc;"></div>
<div style="left:1798px;top:121px;width:383px;height:72px;background:#ebebeb;border:2px solid #858585;border-top-left-radius:4px;border-top-right-radius:4px;"></div>
<div style="left:1800px;top:122px;width:379px;height:22px;background:linear-gradient(90deg,#e1e8f3,#eaf0f8 50%,#edf2fa);border-top-left-radius:3px;border-top-right-radius:3px;"></div>
<div style="left:1800px;top:144px;width:379px;height:2px;background:#b0b0b0;"></div>
<div class="t" style="left:1807px;top:126px;font-size:15.5px;font-weight:bold;color:#4a4a4a;letter-spacing:0.6px;">Sensor</div>
<div style="left:2181px;top:120px;width:5px;height:75px;background:#f6f6f6;"></div>
<div style="left:2186px;top:121px;width:150px;height:72px;background:#ebebeb;border:2px solid #858585;border-top-left-radius:4px;border-top-right-radius:4px;"></div>
<div style="left:2188px;top:122px;width:146px;height:22px;background:linear-gradient(90deg,#e1e8f3,#eaf0f8 50%,#edf2fa);border-top-left-radius:3px;border-top-right-radius:3px;"></div>
<div style="left:2188px;top:144px;width:146px;height:2px;background:#b0b0b0;"></div>
<div class="t" style="left:2195px;top:126px;font-size:15.5px;font-weight:bold;color:#4a4a4a;letter-spacing:0.6px;">Generator</div>
<div style="left:2336px;top:120px;width:5px;height:75px;background:#f6f6f6;"></div>
<div style="left:2341px;top:121px;width:188px;height:72px;background:#ebebeb;border:2px solid #858585;border-top-left-radius:4px;border-top-right-radius:4px;"></div>
<div style="left:2343px;top:122px;width:184px;height:22px;background:linear-gradient(90deg,#e1e8f3,#eaf0f8 50%,#edf2fa);border-top-left-radius:3px;border-top-right-radius:3px;"></div>
<div style="left:2343px;top:144px;width:184px;height:2px;background:#b0b0b0;"></div>
<div class="t" style="left:2350px;top:126px;font-size:15.5px;font-weight:bold;color:#4a4a4a;letter-spacing:0.6px;">Parameters</div>
<div style="left:7px;top:150px;width:249px;height:27px;border-top:3px solid #8a8a8a;border-left:3px solid #8a8a8a;border-right:1px solid #fff;border-bottom:1px solid #fff;background:#f0f0f0;"></div>
<div style="left:12px;top:155px;width:222px;height:20px;background:#0078d7;"></div>
<div class="t" style="left:14px;top:157px;font-size:17px;color:#fff;letter-spacing:0.3px;">Near white scale</div>
<div style="left:235px;top:154px;width:20px;height:22px;background:#efefef;border:1px solid #d0d0d0;border-right:2px solid #7a7a7a;border-bottom:2px solid #7a7a7a;"></div>
<svg style="left:239px;top:162px" width="12" height="7"><path d="M1 1 L11 1 L6 6 Z" fill="#000"/></svg>
<div style="left:270px;top:148px;width:1480px;height:35px;background:#efefef;border-left:2px solid #d8d8d8;border-top:2px solid #d8d8d8;border-right:1px solid #fff;border-bottom:1px solid #fff;"></div>
<div class="t" style="left:272px;top:150px;font-size:20px;color:#000;-webkit-text-stroke:0.6px #000;letter-spacing:0.45px;">Color Space: HDTV Rec709 , White Point: D65, EOTF:&nbsp; SDR, Power law (black compensation) w/gamma = 2.40, # of measures: 0 [13:53:18]</div>
<div style="left:1755px;top:150px;width:24px;height:15px;background:#f0f0f0;border:1px solid #fff;border-right:2px solid #7a7a7a;border-bottom:2px solid #7a7a7a;"></div>
<svg style="left:1755px;top:150px" width="24" height="13"><path d="M6 9 L12 3 L18 9Z" fill="#000" transform="scale(0.75) translate(4,2)"/></svg>
<div style="left:1755px;top:166px;width:24px;height:15px;background:#f0f0f0;border:1px solid #fff;border-right:2px solid #7a7a7a;border-bottom:2px solid #7a7a7a;"></div>
<svg style="left:1755px;top:166px" width="24" height="13"><path d="M6 4 L18 4 L12 10Z" fill="#000" transform="scale(0.75) translate(4,2)"/></svg>
<div class="t" style="left:1806px;top:147px;font-size:17px;color:#111;">Simulated sensor</div>
<div class="t" style="left:1808px;top:168px;font-size:17px;color:#111;">Adaptive</div>
<svg style="left:1938px;top:168px" width="18" height="18"><defs><linearGradient id="sp" x1="0" y1="0" x2="0" y2="1"><stop offset="0" stop-color="#9ae87a"/><stop offset="1" stop-color="#62c840"/></linearGradient></defs><path d="M2 1 L16 9 L2 17 Z" fill="url(#sp)" stroke="#58b838" stroke-width="0.6"/></svg>
<svg style="left:2143px;top:165px" width="26" height="24"><defs><linearGradient id="ei2143" x1="0" y1="0" x2="1" y2="1"><stop offset="0" stop-color="#7ab0f0"/><stop offset="1" stop-color="#1a50b0"/></linearGradient></defs><path d="M2 4 L14 1 L15 20 L3 23 Z" fill="url(#ei2143)" stroke="#1a3a80" stroke-width="0.8"/><path d="M5 7 L12 5 L12.5 17 L5.5 19Z" fill="#f8f0d0"/><path d="M6 12 L8 15 L12 9" stroke="#e0a000" stroke-width="1.5" fill="none"/><path d="M11 15 L22 9" stroke="#3a70c0" stroke-width="2.5"/><circle cx="22.5" cy="9" r="1.8" fill="#e04040"/></svg>
<div class="t" style="left:2190px;top:147px;font-size:17px;color:#111;">DVD manual</div>
<svg style="left:2305px;top:167px" width="26" height="24"><defs><linearGradient id="ei2305" x1="0" y1="0" x2="1" y2="1"><stop offset="0" stop-color="#7ab0f0"/><stop offset="1" stop-color="#1a50b0"/></linearGradient></defs><path d="M2 4 L14 1 L15 20 L3 23 Z" fill="url(#ei2305)" stroke="#1a3a80" stroke-width="0.8"/><path d="M5 7 L12 5 L12.5 17 L5.5 19Z" fill="#f8f0d0"/><path d="M6 12 L8 15 L12 9" stroke="#e0a000" stroke-width="1.5" fill="none"/><path d="M11 15 L22 9" stroke="#3a70c0" stroke-width="2.5"/><circle cx="22.5" cy="9" r="1.8" fill="#e04040"/></svg>
<div style="left:2353px;top:149px;width:15px;height:15px;background:#fff;border-top:2px solid #777;border-left:2px solid #777;border-right:2px solid #f8f8f8;border-bottom:2px solid #f8f8f8;"></div>
<div class="t" style="left:2376px;top:148px;font-size:17px;color:#111;">Reference</div>
<div style="left:2353px;top:170px;width:15px;height:15px;background:#efefef;border-top:2px solid #777;border-left:2px solid #777;border-right:2px solid #f8f8f8;border-bottom:2px solid #f8f8f8;"></div>
<div class="t" style="left:2376px;top:169px;font-size:17px;color:#a8a8a8;">XYZ Adjustment</div>
<div style="left:0px;top:201px;width:2560px;height:279px;background:#f0f0f0;"></div>
<div style="left:0px;top:201px;width:2px;height:279px;background:#8a8a8a;"></div>
<div style="left:7px;top:222px;width:2414px;height:249px;border:2px solid #e02020;border-top:none;"></div>
<div style="left:9px;top:203px;width:2410px;height:19px;background:linear-gradient(90deg,#e3eaf5,#ecf1f9);border-top-left-radius:6px;border-top-right-radius:6px;"></div>
<div style="left:6px;top:202px;width:2413px;height:2px;background:#8a8a8a;"></div>
<svg style="left:2400px;top:202px" width="22" height="24"><path d="M10 1.5 Q18.5 1.5 18.5 9 V24" fill="none" stroke="#e02020" stroke-width="2"/></svg>
<div class="t" style="left:18px;top:208px;font-size:13px;font-weight:bold;color:#3c3c3c;letter-spacing:0.4px;">( Average dE: 6.48 [0.22,6.47,0.00] max: 6.69 [CIE2000] ) [Absolute Y w/gamma]</div>
<div style="left:10px;top:221px;width:2386px;height:248px;background:#f0f0f0;border-left:2px solid #7a7a7a;border-top:2px solid #7a7a7a;"></div>
<div style="left:2396px;top:221px;width:23px;height:2px;background:#ebebeb;"></div>
<div style="left:12px;top:223px;width:69px;height:27px;background:#f0f0f0;border-top:1px solid #fff;border-left:1px solid #fff;"></div>
<div style="left:12px;top:250px;width:69px;height:2px;background:#7a7a7a;"></div>
<div class="t" style="left:12px;top:229px;width:69px;text-align:center;font-size:16.5px;font-weight:bold;color:#000;transform:scaleX(0.91);transform-origin:50% 0;">% White</div>
<div style="left:12px;top:251px;width:69px;height:32px;background:#f0f0f0;border-top:1px solid #fff;border-left:1px solid #fff;"></div>
<div style="left:12px;top:283px;width:69px;height:2px;background:#7a7a7a;"></div>
<div class="t" style="left:12px;top:259px;width:69px;text-align:center;font-size:16.5px;font-weight:bold;color:#000;transform:scaleX(0.91);transform-origin:50% 0;">x</div>
<div style="left:12px;top:284px;width:69px;height:32px;background:#f0f0f0;border-top:1px solid #fff;border-left:1px solid #fff;"></div>
<div style="left:12px;top:316px;width:69px;height:2px;background:#7a7a7a;"></div>
<div class="t" style="left:12px;top:292px;width:69px;text-align:center;font-size:16.5px;font-weight:bold;color:#000;transform:scaleX(0.91);transform-origin:50% 0;">y</div>
<div style="left:12px;top:316px;width:69px;height:32px;background:#f0f0f0;border-top:1px solid #fff;border-left:1px solid #fff;"></div>
<div style="left:12px;top:348px;width:69px;height:2px;background:#7a7a7a;"></div>
<div class="t" style="left:12px;top:324px;width:69px;text-align:center;font-size:16.5px;font-weight:bold;color:#000;transform:scaleX(0.91);transform-origin:50% 0;">Y</div>
<div style="left:12px;top:349px;width:69px;height:31px;background:#f0f0f0;border-top:1px solid #fff;border-left:1px solid #fff;"></div>
<div style="left:12px;top:380px;width:69px;height:2px;background:#7a7a7a;"></div>
<div class="t" style="left:12px;top:357px;width:69px;text-align:center;font-size:16.5px;font-weight:bold;color:#000;transform:scaleX(0.91);transform-origin:50% 0;">Delta E</div>
<div style="left:12px;top:381px;width:69px;height:31px;background:#f0f0f0;border-top:1px solid #fff;border-left:1px solid #fff;"></div>
<div style="left:12px;top:412px;width:69px;height:2px;background:#7a7a7a;"></div>
<div class="t" style="left:12px;top:389px;width:69px;text-align:center;font-size:16.5px;font-weight:bold;color:#000;transform:scaleX(0.91);transform-origin:50% 0;">delta xy</div>
<div style="left:12px;top:413px;width:69px;height:30px;background:#f0f0f0;border-top:1px solid #fff;border-left:1px solid #fff;"></div>
<div style="left:12px;top:443px;width:69px;height:2px;background:#7a7a7a;"></div>
<div class="t" style="left:12px;top:420px;width:69px;text-align:center;font-size:16.5px;font-weight:bold;color:#000;transform:scaleX(0.91);transform-origin:50% 0;">Y target</div>
<div style="left:80px;top:221px;width:2px;height:224px;background:#7a7a7a;"></div>
<div style="left:82px;top:223px;width:458px;height:27px;background:#808080;border-top:1px solid #fff;border-left:1px solid #fff;"></div>
<div style="left:82px;top:250px;width:458px;height:1px;background:#6a6a6a;"></div>
<div style="left:539px;top:223px;width:1px;height:28px;background:#6a6a6a;"></div>
<div class="t" style="left:82px;top:229px;width:458px;text-align:center;font-size:16.5px;font-weight:bold;color:#1a1a1a;">96</div>
<div style="left:541px;top:223px;width:457px;height:27px;background:#999999;border-top:1px solid #fff;border-left:1px solid #fff;"></div>
<div style="left:541px;top:250px;width:457px;height:1px;background:#6a6a6a;"></div>
<div style="left:997px;top:223px;width:1px;height:28px;background:#6a6a6a;"></div>
<div class="t" style="left:541px;top:229px;width:457px;text-align:center;font-size:16.5px;font-weight:bold;color:#1a1a1a;">97</div>
<div style="left:999px;top:223px;width:458px;height:27px;background:#b3b3b3;border-top:1px solid #fff;border-left:1px solid #fff;"></div>
<div style="left:999px;top:250px;width:458px;height:1px;background:#6a6a6a;"></div>
<div style="left:1456px;top:223px;width:1px;height:28px;background:#6a6a6a;"></div>
<div class="t" style="left:999px;top:229px;width:458px;text-align:center;font-size:16.5px;font-weight:bold;color:#1a1a1a;">98</div>
<div style="left:1458px;top:223px;width:457px;height:27px;background:#cccccc;border-top:1px solid #fff;border-left:1px solid #fff;"></div>
<div style="left:1458px;top:250px;width:457px;height:1px;background:#6a6a6a;"></div>
<div style="left:1914px;top:223px;width:1px;height:28px;background:#6a6a6a;"></div>
<div class="t" style="left:1458px;top:229px;width:457px;text-align:center;font-size:16.5px;font-weight:bold;color:#1a1a1a;">99</div>
<div style="left:1916px;top:223px;width:457px;height:27px;background:#e6e6e6;border-top:1px solid #fff;border-left:1px solid #fff;"></div>
<div style="left:1916px;top:250px;width:457px;height:1px;background:#6a6a6a;"></div>
<div style="left:2372px;top:223px;width:1px;height:28px;background:#6a6a6a;"></div>
<div class="t" style="left:1916px;top:229px;width:457px;text-align:center;font-size:16.5px;font-weight:bold;color:#1a1a1a;">100</div>
<div style="left:82px;top:251px;width:2291px;height:33px;background:#ffffff;"></div>
<div style="left:82px;top:283px;width:2291px;height:1px;background:#c8c8c8;"></div>
<div style="left:539px;top:251px;width:1px;height:33px;background:#c8c8c8;"></div>
<div class="t" style="left:382px;top:260px;width:156px;text-align:right;font-size:16px;font-weight:normal;color:#111;transform:scaleX(0.87);transform-origin:100% 0;">0.3198</div>
<div style="left:997px;top:251px;width:1px;height:33px;background:#c8c8c8;"></div>
<div class="t" style="left:840px;top:260px;width:156px;text-align:right;font-size:16px;font-weight:normal;color:#111;transform:scaleX(0.87);transform-origin:100% 0;">0.3201</div>
<div style="left:1456px;top:251px;width:1px;height:33px;background:#c8c8c8;"></div>
<div class="t" style="left:1299px;top:260px;width:156px;text-align:right;font-size:16px;font-weight:normal;color:#111;transform:scaleX(0.87);transform-origin:100% 0;">0.3202</div>
<div style="left:1914px;top:251px;width:1px;height:33px;background:#c8c8c8;"></div>
<div class="t" style="left:1757px;top:260px;width:156px;text-align:right;font-size:16px;font-weight:normal;color:#111;transform:scaleX(0.87);transform-origin:100% 0;">0.3202</div>
<div style="left:2372px;top:251px;width:1px;height:33px;background:#c8c8c8;"></div>
<div class="t" style="left:2215px;top:260px;width:156px;text-align:right;font-size:16px;font-weight:normal;color:#111;transform:scaleX(0.87);transform-origin:100% 0;">0.3205</div>
<div style="left:82px;top:284px;width:2291px;height:33px;background:#ffffff;"></div>
<div style="left:82px;top:316px;width:2291px;height:1px;background:#c8c8c8;"></div>
<div style="left:539px;top:284px;width:1px;height:33px;background:#c8c8c8;"></div>
<div class="t" style="left:382px;top:293px;width:156px;text-align:right;font-size:16px;font-weight:normal;color:#111;transform:scaleX(0.87);transform-origin:100% 0;">0.3421</div>
<div style="left:997px;top:284px;width:1px;height:33px;background:#c8c8c8;"></div>
<div class="t" style="left:840px;top:293px;width:156px;text-align:right;font-size:16px;font-weight:normal;color:#111;transform:scaleX(0.87);transform-origin:100% 0;">0.3426</div>
<div style="left:1456px;top:284px;width:1px;height:33px;background:#c8c8c8;"></div>
<div class="t" style="left:1299px;top:293px;width:156px;text-align:right;font-size:16px;font-weight:normal;color:#111;transform:scaleX(0.87);transform-origin:100% 0;">0.3421</div>
<div style="left:1914px;top:284px;width:1px;height:33px;background:#c8c8c8;"></div>
<div class="t" style="left:1757px;top:293px;width:156px;text-align:right;font-size:16px;font-weight:normal;color:#111;transform:scaleX(0.87);transform-origin:100% 0;">0.3423</div>
<div style="left:2372px;top:284px;width:1px;height:33px;background:#c8c8c8;"></div>
<div class="t" style="left:2215px;top:293px;width:156px;text-align:right;font-size:16px;font-weight:normal;color:#111;transform:scaleX(0.87);transform-origin:100% 0;">0.3428</div>
<div style="left:82px;top:316px;width:2291px;height:33px;background:#ffffff;"></div>
<div style="left:82px;top:348px;width:2291px;height:1px;background:#c8c8c8;"></div>
<div style="left:539px;top:316px;width:1px;height:33px;background:#c8c8c8;"></div>
<div class="t" style="left:382px;top:325px;width:156px;text-align:right;font-size:16px;font-weight:normal;color:#111;transform:scaleX(0.87);transform-origin:100% 0;">167.573</div>
<div style="left:997px;top:316px;width:1px;height:33px;background:#c8c8c8;"></div>
<div class="t" style="left:840px;top:325px;width:156px;text-align:right;font-size:16px;font-weight:normal;color:#111;transform:scaleX(0.87);transform-origin:100% 0;">171.146</div>
<div style="left:1456px;top:316px;width:1px;height:33px;background:#c8c8c8;"></div>
<div class="t" style="left:1299px;top:325px;width:156px;text-align:right;font-size:16px;font-weight:normal;color:#111;transform:scaleX(0.87);transform-origin:100% 0;">175.922</div>
<div style="left:1914px;top:316px;width:1px;height:33px;background:#c8c8c8;"></div>
<div class="t" style="left:1757px;top:325px;width:156px;text-align:right;font-size:16px;font-weight:normal;color:#111;transform:scaleX(0.87);transform-origin:100% 0;">179.872</div>
<div style="left:2372px;top:316px;width:1px;height:33px;background:#c8c8c8;"></div>
<div class="t" style="left:2215px;top:325px;width:156px;text-align:right;font-size:16px;font-weight:normal;color:#111;transform:scaleX(0.87);transform-origin:100% 0;">183.720</div>
<div style="left:82px;top:349px;width:2291px;height:32px;background:#ffaaaa;"></div>
<div style="left:82px;top:380px;width:2291px;height:1px;background:#c8c8c8;"></div>
<div style="left:539px;top:349px;width:1px;height:32px;background:#c8c8c8;"></div>
<div class="t" style="left:382px;top:357px;width:156px;text-align:right;font-size:17px;font-weight:bold;color:#111;transform:scaleX(0.85);transform-origin:100% 0;">6.3</div>
<div style="left:997px;top:349px;width:1px;height:32px;background:#c8c8c8;"></div>
<div class="t" style="left:840px;top:357px;width:156px;text-align:right;font-size:17px;font-weight:bold;color:#111;transform:scaleX(0.85);transform-origin:100% 0;">6.6</div>
<div style="left:1456px;top:349px;width:1px;height:32px;background:#c8c8c8;"></div>
<div class="t" style="left:1299px;top:357px;width:156px;text-align:right;font-size:17px;font-weight:bold;color:#111;transform:scaleX(0.85);transform-origin:100% 0;">6.4</div>
<div style="left:1914px;top:349px;width:1px;height:32px;background:#c8c8c8;"></div>
<div class="t" style="left:1757px;top:357px;width:156px;text-align:right;font-size:17px;font-weight:bold;color:#111;transform:scaleX(0.85);transform-origin:100% 0;">6.5</div>
<div style="left:2372px;top:349px;width:1px;height:32px;background:#c8c8c8;"></div>
<div class="t" style="left:2215px;top:357px;width:156px;text-align:right;font-size:17px;font-weight:bold;color:#111;transform:scaleX(0.85);transform-origin:100% 0;">6.7</div>
<div style="left:82px;top:381px;width:2291px;height:32px;background:#f0f0f0;"></div>
<div style="left:82px;top:412px;width:2291px;height:1px;background:#c8c8c8;"></div>
<div style="left:539px;top:381px;width:1px;height:32px;background:#c8c8c8;"></div>
<div class="t" style="left:382px;top:389px;width:156px;text-align:right;font-size:16px;font-weight:normal;color:#111;transform:scaleX(0.87);transform-origin:100% 0;">0.0149</div>
<div style="left:997px;top:381px;width:1px;height:32px;background:#c8c8c8;"></div>
<div class="t" style="left:840px;top:389px;width:156px;text-align:right;font-size:16px;font-weight:normal;color:#111;transform:scaleX(0.87);transform-origin:100% 0;">0.0155</div>
<div style="left:1456px;top:381px;width:1px;height:32px;background:#c8c8c8;"></div>
<div class="t" style="left:1299px;top:389px;width:156px;text-align:right;font-size:16px;font-weight:normal;color:#111;transform:scaleX(0.87);transform-origin:100% 0;">0.0151</div>
<div style="left:1914px;top:381px;width:1px;height:32px;background:#c8c8c8;"></div>
<div class="t" style="left:1757px;top:389px;width:156px;text-align:right;font-size:16px;font-weight:normal;color:#111;transform:scaleX(0.87);transform-origin:100% 0;">0.0152</div>
<div style="left:2372px;top:381px;width:1px;height:32px;background:#c8c8c8;"></div>
<div class="t" style="left:2215px;top:389px;width:156px;text-align:right;font-size:16px;font-weight:normal;color:#111;transform:scaleX(0.87);transform-origin:100% 0;">0.0158</div>
<div style="left:82px;top:413px;width:2291px;height:31px;background:#dfdfdf;"></div>
<div style="left:82px;top:443px;width:2291px;height:1px;background:#c8c8c8;"></div>
<div style="left:539px;top:413px;width:1px;height:31px;background:#c8c8c8;"></div>
<div class="t" style="left:382px;top:421px;width:156px;text-align:right;font-size:16px;font-weight:normal;color:#111;transform:scaleX(0.87);transform-origin:100% 0;">166.192</div>
<div style="left:997px;top:413px;width:1px;height:31px;background:#c8c8c8;"></div>
<div class="t" style="left:840px;top:421px;width:156px;text-align:right;font-size:16px;font-weight:normal;color:#111;transform:scaleX(0.87);transform-origin:100% 0;">170.016</div>
<div style="left:1456px;top:413px;width:1px;height:31px;background:#c8c8c8;"></div>
<div class="t" style="left:1299px;top:421px;width:156px;text-align:right;font-size:16px;font-weight:normal;color:#111;transform:scaleX(0.87);transform-origin:100% 0;">173.890</div>
<div style="left:1914px;top:413px;width:1px;height:31px;background:#c8c8c8;"></div>
<div class="t" style="left:1757px;top:421px;width:156px;text-align:right;font-size:16px;font-weight:normal;color:#111;transform:scaleX(0.87);transform-origin:100% 0;">177.816</div>
<div style="left:2372px;top:413px;width:1px;height:31px;background:#c8c8c8;"></div>
<div class="t" style="left:2215px;top:421px;width:156px;text-align:right;font-size:16px;font-weight:normal;color:#111;transform:scaleX(0.87);transform-origin:100% 0;">183.801</div>
<div style="left:2373px;top:223px;width:22px;height:221px;background:#f0f0f0;"></div>
<svg style="left:2378px;top:229px" width="12" height="10"><path d="M1 9 L6 2 L11 9Z" fill="#a6a6a6"/></svg>
<svg style="left:2378px;top:428px" width="12" height="10"><path d="M1 1 L6 8 L11 1Z" fill="#a6a6a6"/></svg>
<div style="left:12px;top:444px;width:2383px;height:21px;background:#f0f0f0;"></div>
<svg style="left:17px;top:448px" width="10" height="12"><path d="M9 1 L2 6 L9 11Z" fill="#a6a6a6"/></svg>
<svg style="left:2358px;top:448px" width="10" height="12"><path d="M1 1 L8 6 L1 11Z" fill="#a6a6a6"/></svg>
<div style="left:2396px;top:225px;width:23px;height:242px;background:#ebebeb;"></div>
<div style="left:2396px;top:223px;width:23px;height:2px;background:#e02020;"></div>
<div style="left:7px;top:222px;width:2px;height:248px;background:#e02020;"></div>
<div style="left:6px;top:203px;width:2px;height:19px;background:#8a8a8a;"></div>
<div style="left:9px;top:222px;width:2px;height:247px;background:#7a7a7a;"></div>
<div style="left:2420px;top:199px;width:116px;height:281px;background:#888888;"></div>
<div style="left:2420px;top:199px;width:3px;height:281px;background:#f4f4f4;"></div>
<div style="left:2425px;top:201px;width:106px;height:129px;background:#f6f6f6;"></div>
<div style="left:2531px;top:199px;width:5px;height:281px;background:#7b7b7b;"></div>
<div style="left:2426px;top:203px;width:104px;height:125px;background:#ebebeb;border:2px solid #858585;border-top-left-radius:4px;border-top-right-radius:4px;"></div>
<div style="left:2428px;top:204px;width:100px;height:22px;background:linear-gradient(90deg,#e1e8f3,#eaf0f8 50%,#edf2fa);border-top-left-radius:3px;border-top-right-radius:3px;"></div>
<div style="left:2428px;top:226px;width:100px;height:2px;background:#b0b0b0;"></div>
<div class="t" style="left:2435px;top:208px;font-size:15.5px;font-weight:bold;color:#4a4a4a;letter-spacing:0.6px;">Display</div>
<svg style="left:2438px;top:226px" width="16" height="16"><circle cx="8" cy="8" r="6" fill="#efefef"/><path d="M3 12 A6.2 6.2 0 0 1 12 3" fill="none" stroke="#7a7a7a" stroke-width="2"/><path d="M12 3 A6.2 6.2 0 0 1 3 12" fill="none" stroke="#f6f6f6" stroke-width="1.6"/></svg>
<div class="t" style="left:2461px;top:227px;font-size:16px;color:#a8a8a8;">Sensor</div>
<svg style="left:2438px;top:246px" width="16" height="16"><circle cx="8" cy="8" r="6" fill="#fff"/><path d="M3 12 A6.2 6.2 0 0 1 12 3" fill="none" stroke="#7a7a7a" stroke-width="2"/><path d="M12 3 A6.2 6.2 0 0 1 3 12" fill="none" stroke="#f6f6f6" stroke-width="1.6"/></svg>
<div class="t" style="left:2461px;top:247px;font-size:16px;color:#111;">RGB</div>
<svg style="left:2438px;top:266px" width="16" height="16"><circle cx="8" cy="8" r="6" fill="#fff"/><path d="M3 12 A6.2 6.2 0 0 1 12 3" fill="none" stroke="#7a7a7a" stroke-width="2"/><path d="M12 3 A6.2 6.2 0 0 1 3 12" fill="none" stroke="#f6f6f6" stroke-width="1.6"/></svg>
<div class="t" style="left:2461px;top:267px;font-size:16px;color:#111;">XYZ</div>
<svg style="left:2438px;top:286px" width="16" height="16"><circle cx="8" cy="8" r="6" fill="#fff"/><path d="M3 12 A6.2 6.2 0 0 1 12 3" fill="none" stroke="#7a7a7a" stroke-width="2"/><path d="M12 3 A6.2 6.2 0 0 1 3 12" fill="none" stroke="#f6f6f6" stroke-width="1.6"/></svg>
<div class="t" style="left:2461px;top:287px;font-size:16px;color:#111;">xyz</div>
<svg style="left:2438px;top:305px" width="16" height="16"><circle cx="8" cy="8" r="6" fill="#fff"/><path d="M3 12 A6.2 6.2 0 0 1 12 3" fill="none" stroke="#7a7a7a" stroke-width="2"/><path d="M12 3 A6.2 6.2 0 0 1 3 12" fill="none" stroke="#f6f6f6" stroke-width="1.6"/><circle cx="8" cy="8" r="2.2" fill="#000"/></svg>
<div class="t" style="left:2461px;top:306px;font-size:16px;color:#111;">xyY</div>
<div style="left:2425px;top:331px;width:104px;height:37px;background:#ebebeb;border-top:2px solid #fafafa;border-left:1px solid #f4f4f4;border-right:1px solid #9a9a9a;border-bottom:1px solid #9a9a9a;"></div>
<div class="t" style="left:2487px;top:340px;font-size:17px;color:#111;">Go</div>

<div style="left:2425px;top:368px;width:104px;height:37px;background:#ebebeb;border-top:2px solid #fafafa;border-left:1px solid #f4f4f4;border-right:1px solid #9a9a9a;border-bottom:1px solid #9a9a9a;"></div>
<div class="t" style="left:2472px;top:377px;font-size:17px;color:#111;">Delete</div>

<div style="left:2425px;top:405px;width:104px;height:37px;background:#ebebeb;border-top:2px solid #fafafa;border-left:1px solid #f4f4f4;border-right:1px solid #9a9a9a;border-bottom:1px solid #9a9a9a;"></div>
<div class="t" style="left:2482px;top:414px;font-size:17px;color:#111;">Refs</div>

<svg style="left:2426px;top:330px" width="54" height="115" viewBox="0 0 54 115"><defs><linearGradient id="bin2" x1="0" y1="0" x2="1" y2="0"><stop offset="0" stop-color="#d8f4ff"/><stop offset="0.7" stop-color="#9ad0f4"/><stop offset="1" stop-color="#5aa0dc"/></linearGradient></defs><rect x="6.5" y="4.5" width="3.5" height="26.5" fill="#1a1a1a"/><rect x="42.5" y="9" width="3.5" height="27" fill="#1a1a1a"/><path d="M8 7.5 V29" stroke="#f4f4f4" stroke-width="1.2" stroke-dasharray="1,1.2"/><path d="M44.2 11 V35" stroke="#f4f4f4" stroke-width="1.2" stroke-dasharray="1,1.2"/><path d="M11 12 C14 9 16 11 15 14 C18 15 18 19 15 20 C17 23 16 27 12 27 Z" fill="#d8d8d8" stroke="#333" stroke-width="0.8"/><path d="M41 12 C37 11 35 14 37 16 C34 17 34 21 38 22 L41 22 Z" fill="#d8d8d8" stroke="#333" stroke-width="0.8"/><path d="M10 6 C16 3 22 4 24 9" fill="none" stroke="#222" stroke-width="2.2"/><path d="M20 13 L31 9 L43 32 L33 37 Q27 38 24 34 Z" fill="#2a2a2a"/><path d="M22.5 14.5 L30 11.5 L33 22.5 L25.5 25.5 Z" fill="#e8f2fa"/><path d="M26 27.5 L34 24.5 L39 31.5 L31 35 Z" fill="#f4f4f4"/><path d="M30 6 L37 10" stroke="#333" stroke-width="1"/><path d="M8.5 44 Q20 40 33 41 L42.5 40.5 L39 66 Q36 72 26 73 Q16 73 14 68 Z" fill="url(#bin2)" stroke="#7aaed8" stroke-width="0.8"/><path d="M10 44 Q24 48 42 41" fill="none" stroke="#5a98d8" stroke-width="2.2"/><ellipse cx="26" cy="67" rx="12" ry="4" fill="#c8ecfc" opacity="0.8"/><path d="M25 58 C24 53 29 50 34 52 L35 49.5 L37.5 56 L31 57 L33 55 C30 54 27 55 28 58 Z" fill="#109a18"/><path d="M37 60 C38 65 33 68 28 66 L27 68.5 L24.5 62 L31 61 L29 63 C32 64 35 63 34 60 Z" fill="#109a18"/><path d="M6 109 V96 L9 94 L11 93 L13 89 L14 85.5 L15.5 84 L17 87 L18 89 L20 92 L22 92 L25 88 L26 83 L29 81.5 L32 83 L34 86 L36 89 L38 92 L40 92 L41 90 L44 90 L45 92 L47 92 V109 Z" fill="#f0f000"/><rect x="6.5" y="97" width="3" height="12" fill="#000080"/><rect x="9.5" y="95" width="3" height="14" fill="#ff00ff"/><path d="M12.5 109 V90 L14.5 86.5 L16.5 90 V109Z" fill="#0000f0"/><rect x="16.5" y="91" width="3.5" height="18" fill="#00f0f0"/><rect x="20" y="94" width="5" height="15" fill="#00f000"/><rect x="25" y="85" width="8" height="24" fill="#ffff00"/><path d="M33 109 V85 L36 89 L38 93 V109Z" fill="#800000"/><rect x="38" y="94" width="9" height="15" fill="#ff0000"/></svg>
<div style="left:2432px;top:448px;width:70px;height:22px;background:#ebebeb;"></div>
<div style="left:2434px;top:451px;width:15px;height:15px;background:#fff;border-top:2px solid #777;border-left:2px solid #777;border-right:2px solid #f8f8f8;border-bottom:2px solid #f8f8f8;"></div>
<div class="t" style="left:2455px;top:450px;font-size:17px;color:#111;">Edit</div>
<div style="left:0px;top:472px;width:2560px;height:3px;background:#f0f0f0;"></div>
<div style="left:0px;top:475px;width:2560px;height:5px;background:#7b7b7b;"></div>
<div style="left:0px;top:480px;width:2560px;height:900px;background:#f0f0f0;"></div>
<div style="left:0px;top:480px;width:2px;height:912px;background:#8a8a8a;"></div>
<div style="left:2px;top:480px;width:480px;height:4px;background:#fbfbfb;"></div>
<div style="left:7px;top:484px;width:472px;height:872px;background:#ebebeb;border:2px solid #858585;border-top-left-radius:4px;border-top-right-radius:4px;"></div>
<div style="left:9px;top:485px;width:468px;height:21px;background:linear-gradient(90deg,#e1e8f3,#eaf0f8 50%,#edf2fa);border-top-left-radius:3px;border-top-right-radius:3px;"></div>
<div style="left:9px;top:506px;width:468px;height:2px;background:#b0b0b0;"></div>
<div class="t" style="left:16px;top:489px;font-size:15px;font-weight:bold;color:#4a4a4a;letter-spacing:0.6px;">Selected color</div>
<div style="left:479px;top:480px;width:2px;height:882px;background:#fbfbfb;"></div>
<div style="left:481px;top:480px;width:4px;height:882px;background:#7b7b7b;"></div>
<div style="left:485px;top:480px;width:4px;height:882px;background:#fbfbfb;"></div>
<div style="left:489px;top:484px;width:2044px;height:872px;background:#ebebeb;border:2px solid #858585;border-top-left-radius:4px;border-top-right-radius:4px;"></div>
<div style="left:491px;top:485px;width:2040px;height:21px;background:linear-gradient(90deg,#e1e8f3,#eaf0f8 50%,#edf2fa);border-top-left-radius:3px;border-top-right-radius:3px;"></div>
<div style="left:491px;top:506px;width:2040px;height:2px;background:#b0b0b0;"></div>
<div class="t" style="left:498px;top:489px;font-size:15px;font-weight:bold;color:#4a4a4a;letter-spacing:0.6px;">Information</div>
<div style="left:2531px;top:480px;width:5px;height:887px;background:#7b7b7b;"></div>
<div style="left:2536px;top:480px;width:24px;height:910px;background:#f0f0f0;"></div>
<div style="left:2546px;top:136px;width:3px;height:1173px;background:#888888;"></div>
<div style="left:17px;top:509px;width:143px;height:20px;background:#efefef;"></div>
<div class="t" style="left:22px;top:512px;font-size:16px;color:#111;">RGB Levels</div>
<div style="left:289px;top:507px;width:148px;height:22px;background:#efefef;"></div>
<div class="t" style="left:301px;top:509px;font-size:17px;color:#111;">Current Measure</div>
<div style="left:17px;top:541px;width:250px;height:116px;background:#efefef;"></div>
<div style="left:17px;top:596px;width:250px;height:2px;background:repeating-linear-gradient(90deg,#a8a8a8 0 4px,transparent 4px 7px);"></div>
<div class="t" style="left:8px;top:615px;width:80px;text-align:center;font-size:18px;font-family:'Liberation Serif',serif;font-weight:bold;color:#111;">0.0%</div>
<div class="t" style="left:71px;top:615px;width:80px;text-align:center;font-size:18px;font-family:'Liberation Serif',serif;font-weight:bold;color:#111;">0.0%</div>
<div class="t" style="left:135px;top:615px;width:80px;text-align:center;font-size:18px;font-family:'Liberation Serif',serif;font-weight:bold;color:#111;">0.0%</div>
<div class="t" style="left:200px;top:615px;width:80px;text-align:center;font-size:18px;font-family:'Liberation Serif',serif;font-weight:bold;color:#111;">dE 0.0</div>
<svg style="left:17px;top:634px" width="251" height="16"><path d="M0 8 Q30 -2 60 8 Z" fill="#a00000" stroke="#000" stroke-width="1"/><path d="M63 8 Q93 -2 125 8 Z" fill="#00a000" stroke="#000" stroke-width="1"/><path d="M127 8 Q157 -2 188 8 Z" fill="#0000a0" stroke="#000" stroke-width="1"/><path d="M191 8 Q221 -2 251 5 L251 8 Z" fill="#c09010" stroke="#000" stroke-width="1"/><rect x="0" y="8" width="251" height="7" fill="#000"/></svg>
<div style="left:20px;top:664px;width:240px;height:95px;background:#efefef;"></div>
<div class="t" style="left:44px;top:668px;font-size:16.5px;font-weight:bold;color:#111;letter-spacing:0.4px;">Measure</div>
<div class="t" style="left:159px;top:668px;font-size:16.5px;font-weight:bold;color:#111;letter-spacing:0.4px;">Reference</div>
<div class="t" style="left:22px;top:779px;font-size:16.5px;color:#111;">Target</div>
<div style="left:62px;top:797px;width:146px;height:112px;border:1px solid #333;background:conic-gradient(from 0deg at 50% 50%,#ffd000 0deg,#ff2000 60deg,#ff0060 110deg,#9000c0 160deg,#0000ff 210deg,#00a0c0 270deg,#00ff40 320deg,#a0ff00 345deg,#ffd000 360deg);"></div>
<svg style="left:62px;top:797px" width="146" height="112"><rect x="22" y="17" width="101" height="78" rx="10" fill="#000" stroke="#fff" stroke-width="1"/><path d="M72 14 V100 M19 56 H128" stroke="#fff" stroke-width="1" stroke-dasharray="3,2"/><ellipse cx="72" cy="56" rx="26" ry="19" fill="none" stroke="#fff" stroke-width="1" stroke-dasharray="3,2"/></svg>
<div style="left:275px;top:538px;width:191px;height:812px;background:#f0f0f0;border-top:3px solid #7a7a7a;border-left:2px solid #7a7a7a;"></div>
<div style="left:277px;top:540.0px;width:66px;height:28.7px;background:#f0f0f0;border-top:1px solid #fff;"></div>
<div style="left:277px;top:567.2px;width:66px;height:2px;background:#7a7a7a;"></div>
<div style="left:344px;top:540.0px;width:99px;height:28.7px;background:#ffffff;border-bottom:1px solid #cdcdcd;"></div>
<div class="t" style="left:277px;top:546.0px;width:66px;text-align:center;font-size:15.5px;font-weight:bold;color:#111;">Y cd/m&sup2;</div>
<div style="left:277px;top:568.7px;width:66px;height:28.7px;background:#f0f0f0;border-top:1px solid #fff;"></div>
<div style="left:277px;top:595.9000000000001px;width:66px;height:2px;background:#7a7a7a;"></div>
<div style="left:344px;top:568.7px;width:99px;height:28.7px;background:#ffffff;border-bottom:1px solid #cdcdcd;"></div>
<div class="t" style="left:277px;top:574.7px;width:66px;text-align:center;font-size:15.5px;font-weight:bold;color:#111;">Y ftL</div>
<div style="left:277px;top:597.4px;width:66px;height:28.7px;background:#f0f0f0;border-top:1px solid #fff;"></div>
<div style="left:277px;top:624.6px;width:66px;height:2px;background:#7a7a7a;"></div>
<div style="left:344px;top:597.4px;width:99px;height:28.7px;background:#ffffff;border-bottom:1px solid #cdcdcd;"></div>
<div class="t" style="left:277px;top:603.4px;width:66px;text-align:center;font-size:15.5px;font-weight:bold;color:#111;">T&deg;</div>
<div style="left:277px;top:626.1px;width:66px;height:28.7px;background:#f0f0f0;border-top:1px solid #fff;"></div>
<div style="left:277px;top:653.3000000000001px;width:66px;height:2px;background:#7a7a7a;"></div>
<div style="left:344px;top:626.1px;width:99px;height:28.7px;background:#dfdfdf;border-bottom:1px solid #cdcdcd;"></div>
<div class="t" style="left:277px;top:632.1px;width:66px;text-align:center;font-size:15.5px;font-weight:bold;color:#111;">X</div>
<div style="left:277px;top:654.8px;width:66px;height:28.7px;background:#f0f0f0;border-top:1px solid #fff;"></div>
<div style="left:277px;top:682.0px;width:66px;height:2px;background:#7a7a7a;"></div>
<div style="left:344px;top:654.8px;width:99px;height:28.7px;background:#dfdfdf;border-bottom:1px solid #cdcdcd;"></div>
<div class="t" style="left:277px;top:660.8px;width:66px;text-align:center;font-size:15.5px;font-weight:bold;color:#111;">Y</div>
<div style="left:277px;top:683.5px;width:66px;height:28.7px;background:#f0f0f0;border-top:1px solid #fff;"></div>
<div style="left:277px;top:710.7px;width:66px;height:2px;background:#7a7a7a;"></div>
<div style="left:344px;top:683.5px;width:99px;height:28.7px;background:#dfdfdf;border-bottom:1px solid #cdcdcd;"></div>
<div class="t" style="left:277px;top:689.5px;width:66px;text-align:center;font-size:15.5px;font-weight:bold;color:#111;">Z</div>
<div style="left:277px;top:712.2px;width:66px;height:28.7px;background:#f0f0f0;border-top:1px solid #fff;"></div>
<div style="left:277px;top:739.4000000000001px;width:66px;height:2px;background:#7a7a7a;"></div>
<div style="left:344px;top:712.2px;width:99px;height:28.7px;background:#ffffff;border-bottom:1px solid #cdcdcd;"></div>
<div class="t" style="left:277px;top:718.2px;width:66px;text-align:center;font-size:15.5px;font-weight:bold;color:#111;">R</div>
<div style="left:277px;top:740.9px;width:66px;height:28.7px;background:#f0f0f0;border-top:1px solid #fff;"></div>
<div style="left:277px;top:768.1px;width:66px;height:2px;background:#7a7a7a;"></div>
<div style="left:344px;top:740.9px;width:99px;height:28.7px;background:#ffffff;border-bottom:1px solid #cdcdcd;"></div>
<div class="t" style="left:277px;top:746.9px;width:66px;text-align:center;font-size:15.5px;font-weight:bold;color:#111;">G</div>
<div style="left:277px;top:769.6px;width:66px;height:28.7px;background:#f0f0f0;border-top:1px solid #fff;"></div>
<div style="left:277px;top:796.8000000000001px;width:66px;height:2px;background:#7a7a7a;"></div>
<div style="left:344px;top:769.6px;width:99px;height:28.7px;background:#ffffff;border-bottom:1px solid #cdcdcd;"></div>
<div class="t" style="left:277px;top:775.6px;width:66px;text-align:center;font-size:15.5px;font-weight:bold;color:#111;">B</div>
<div style="left:277px;top:798.3px;width:66px;height:28.7px;background:#f0f0f0;border-top:1px solid #fff;"></div>
<div style="left:277px;top:825.5px;width:66px;height:2px;background:#7a7a7a;"></div>
<div style="left:344px;top:798.3px;width:99px;height:28.7px;background:#dfdfdf;border-bottom:1px solid #cdcdcd;"></div>
<div class="t" style="left:277px;top:804.3px;width:66px;text-align:center;font-size:15.5px;font-weight:bold;color:#111;">x</div>
<div style="left:277px;top:827.0px;width:66px;height:28.7px;background:#f0f0f0;border-top:1px solid #fff;"></div>
<div style="left:277px;top:854.2px;width:66px;height:2px;background:#7a7a7a;"></div>
<div style="left:344px;top:827.0px;width:99px;height:28.7px;background:#dfdfdf;border-bottom:1px solid #cdcdcd;"></div>
<div class="t" style="left:277px;top:833.0px;width:66px;text-align:center;font-size:15.5px;font-weight:bold;color:#111;">y</div>
<div style="left:277px;top:855.7px;width:66px;height:28.7px;background:#f0f0f0;border-top:1px solid #fff;"></div>
<div style="left:277px;top:882.9000000000001px;width:66px;height:2px;background:#7a7a7a;"></div>
<div style="left:344px;top:855.7px;width:99px;height:28.7px;background:#dfdfdf;border-bottom:1px solid #cdcdcd;"></div>
<div class="t" style="left:277px;top:861.7px;width:66px;text-align:center;font-size:15.5px;font-weight:bold;color:#111;">Y</div>
<div style="left:277px;top:884.4px;width:66px;height:28.7px;background:#f0f0f0;border-top:1px solid #fff;"></div>
<div style="left:277px;top:911.6px;width:66px;height:2px;background:#7a7a7a;"></div>
<div style="left:344px;top:884.4px;width:99px;height:28.7px;background:#ffffff;border-bottom:1px solid #cdcdcd;"></div>
<div class="t" style="left:277px;top:890.4px;width:66px;text-align:center;font-size:15.5px;font-weight:bold;color:#111;">x</div>
<div style="left:277px;top:913.0999999999999px;width:66px;height:28.7px;background:#f0f0f0;border-top:1px solid #fff;"></div>
<div style="left:277px;top:940.3px;width:66px;height:2px;background:#7a7a7a;"></div>
<div style="left:344px;top:913.0999999999999px;width:99px;height:28.7px;background:#ffffff;border-bottom:1px solid #cdcdcd;"></div>
<div class="t" style="left:277px;top:919.0999999999999px;width:66px;text-align:center;font-size:15.5px;font-weight:bold;color:#111;">y</div>
<div style="left:277px;top:941.8px;width:66px;height:28.7px;background:#f0f0f0;border-top:1px solid #fff;"></div>
<div style="left:277px;top:969.0px;width:66px;height:2px;background:#7a7a7a;"></div>
<div style="left:344px;top:941.8px;width:99px;height:28.7px;background:#ffffff;border-bottom:1px solid #cdcdcd;"></div>
<div class="t" style="left:277px;top:947.8px;width:66px;text-align:center;font-size:15.5px;font-weight:bold;color:#111;">z</div>
<div style="left:277px;top:970.5px;width:66px;height:28.7px;background:#f0f0f0;border-top:1px solid #fff;"></div>
<div style="left:277px;top:997.7px;width:66px;height:2px;background:#7a7a7a;"></div>
<div style="left:344px;top:970.5px;width:99px;height:28.7px;background:#dfdfdf;border-bottom:1px solid #cdcdcd;"></div>
<div class="t" style="left:277px;top:976.5px;width:66px;text-align:center;font-size:15.5px;font-weight:bold;color:#111;">L</div>
<div style="left:277px;top:999.2px;width:66px;height:28.7px;background:#f0f0f0;border-top:1px solid #fff;"></div>
<div style="left:277px;top:1026.4px;width:66px;height:2px;background:#7a7a7a;"></div>
<div style="left:344px;top:999.2px;width:99px;height:28.7px;background:#dfdfdf;border-bottom:1px solid #cdcdcd;"></div>
<div class="t" style="left:277px;top:1005.2px;width:66px;text-align:center;font-size:15.5px;font-weight:bold;color:#111;">a</div>
<div style="left:277px;top:1027.9px;width:66px;height:28.7px;background:#f0f0f0;border-top:1px solid #fff;"></div>
<div style="left:277px;top:1055.1000000000001px;width:66px;height:2px;background:#7a7a7a;"></div>
<div style="left:344px;top:1027.9px;width:99px;height:28.7px;background:#dfdfdf;border-bottom:1px solid #cdcdcd;"></div>
<div class="t" style="left:277px;top:1033.9px;width:66px;text-align:center;font-size:15.5px;font-weight:bold;color:#111;">b</div>
<div style="left:277px;top:1056.6px;width:66px;height:28.7px;background:#f0f0f0;border-top:1px solid #fff;"></div>
<div style="left:277px;top:1083.8px;width:66px;height:2px;background:#7a7a7a;"></div>
<div style="left:344px;top:1056.6px;width:99px;height:28.7px;background:#ffffff;border-bottom:1px solid #cdcdcd;"></div>
<div class="t" style="left:277px;top:1062.6px;width:66px;text-align:center;font-size:15.5px;font-weight:bold;color:#111;">L</div>
<div style="left:277px;top:1085.3px;width:66px;height:28.7px;background:#f0f0f0;border-top:1px solid #fff;"></div>
<div style="left:277px;top:1112.5px;width:66px;height:2px;background:#7a7a7a;"></div>
<div style="left:344px;top:1085.3px;width:99px;height:28.7px;background:#ffffff;border-bottom:1px solid #cdcdcd;"></div>
<div class="t" style="left:277px;top:1091.3px;width:66px;text-align:center;font-size:15.5px;font-weight:bold;color:#111;">C</div>
<div style="left:277px;top:1114.0px;width:66px;height:28.7px;background:#f0f0f0;border-top:1px solid #fff;"></div>
<div style="left:277px;top:1141.2px;width:66px;height:2px;background:#7a7a7a;"></div>
<div style="left:344px;top:1114.0px;width:99px;height:28.7px;background:#ffffff;border-bottom:1px solid #cdcdcd;"></div>
<div class="t" style="left:277px;top:1120.0px;width:66px;text-align:center;font-size:15.5px;font-weight:bold;color:#111;">H</div>
<div style="left:277px;top:1142.6999999999998px;width:66px;height:28.7px;background:#f0f0f0;border-top:1px solid #fff;"></div>
<div style="left:277px;top:1169.8999999999999px;width:66px;height:2px;background:#7a7a7a;"></div>
<div style="left:344px;top:1142.6999999999998px;width:99px;height:28.7px;background:#dfdfdf;border-bottom:1px solid #cdcdcd;"></div>
<div class="t" style="left:277px;top:1148.6999999999998px;width:66px;text-align:center;font-size:15.5px;font-weight:bold;color:#111;">L</div>
<div style="left:277px;top:1171.4px;width:66px;height:28.7px;background:#f0f0f0;border-top:1px solid #fff;"></div>
<div style="left:277px;top:1198.6000000000001px;width:66px;height:2px;background:#7a7a7a;"></div>
<div style="left:344px;top:1171.4px;width:99px;height:28.7px;background:#dfdfdf;border-bottom:1px solid #cdcdcd;"></div>
<div class="t" style="left:277px;top:1177.4px;width:66px;text-align:center;font-size:15.5px;font-weight:bold;color:#111;">M</div>
<div style="left:277px;top:1200.1px;width:66px;height:28.7px;background:#f0f0f0;border-top:1px solid #fff;"></div>
<div style="left:277px;top:1227.3px;width:66px;height:2px;background:#7a7a7a;"></div>
<div style="left:344px;top:1200.1px;width:99px;height:28.7px;background:#dfdfdf;border-bottom:1px solid #cdcdcd;"></div>
<div class="t" style="left:277px;top:1206.1px;width:66px;text-align:center;font-size:15.5px;font-weight:bold;color:#111;">S</div>
<div style="left:342px;top:540px;width:2px;height:689px;background:#7a7a7a;"></div>
<div style="left:277px;top:1229px;width:166px;height:120px;background:#a0a0a0;"></div>
<div style="left:443px;top:540px;width:22px;height:810px;background:#f0f0f0;"></div>
<svg style="left:449px;top:546px" width="12" height="10"><path d="M1 9 L6 2 L11 9Z" fill="#a6a6a6"/></svg>
<svg style="left:449px;top:1333px" width="12" height="10"><path d="M1 1 L6 8 L11 1Z" fill="#a6a6a6"/></svg>
<div style="left:494px;top:511px;width:379px;height:29px;background:#fff;border-top:3px solid #8a8a8a;border-left:3px solid #8a8a8a;border-right:1px solid #f8f8f8;border-bottom:1px solid #f8f8f8;"></div>
<div class="t" style="left:500px;top:517px;font-size:17px;color:#111;letter-spacing:0.35px;">NearBlack - NearWhite</div>
<div style="left:849px;top:514px;width:22px;height:23px;background:#efefef;border:1px solid #e0e0e0;border-right:2px solid #7a7a7a;border-bottom:2px solid #7a7a7a;"></div>
<svg style="left:855px;top:522px" width="12" height="7"><path d="M1 1 L11 1 L6 6 Z" fill="#000"/></svg>
<div style="left:495px;top:548px;width:2034px;height:803px;background:#f0f0f0;"></div>
<div style="left:496px;top:548px;width:1015px;height:6px;background:linear-gradient(180deg,#8a8a8a 0,#7a7a7a 2px,#9a9a9a 4px,#8a8a8a 6px);"></div>
<div style="left:496px;top:548px;width:6px;height:798px;background:linear-gradient(90deg,#8a8a8a 0,#7a7a7a 2px,#9a9a9a 4px,#8a8a8a 6px);"></div>
<div style="left:1512px;top:548px;width:1011px;height:6px;background:linear-gradient(180deg,#8a8a8a 0,#7a7a7a 2px,#9a9a9a 4px,#8a8a8a 6px);"></div>
<div style="left:1510px;top:548px;width:7px;height:798px;background:linear-gradient(90deg,#c8c8c8 0,#8a8a8a 3px,#808080 7px);"></div>
<div style="left:1507px;top:548px;width:3px;height:802px;background:#fdfdfd;"></div>
<div style="left:496px;top:1346px;width:2031px;height:4px;background:#fdfdfd;"></div>
<div style="left:2523px;top:548px;width:4px;height:802px;background:#fdfdfd;"></div>
<div style="left:2527px;top:548px;width:3px;height:808px;background:#8a8a8a;"></div>
<div style="left:489px;top:1350px;width:2044px;height:7px;background:#ebebeb;"></div>
<svg style="left:502px;top:554px" width="1005" height="792" viewBox="0 0 1005 792"><defs><linearGradient id="lbg" x1="0" y1="0" x2="1" y2="0"><stop offset="0" stop-color="#1d1d1d"/><stop offset="1" stop-color="#0a0a0a"/></linearGradient></defs><rect x="0" y="0" width="1005" height="792" fill="url(#lbg)"/><rect x="0" y="0" width="1.5" height="792" fill="#0e4040"/><rect x="0" y="78" width="1005" height="2" fill="#0b3535"/><rect x="0" y="157" width="1005" height="2" fill="#0b3535"/><rect x="0" y="236" width="1005" height="2" fill="#0b3535"/><rect x="0" y="315" width="1005" height="2" fill="#0b3535"/><rect x="0" y="395" width="1005" height="2" fill="#0b3535"/><rect x="0" y="474" width="1005" height="2" fill="#0b3535"/><rect x="0" y="553" width="1005" height="2" fill="#0b3535"/><rect x="0" y="632" width="1005" height="2" fill="#0b3535"/><rect x="0" y="712" width="1005" height="2" fill="#0b3535"/><rect x="251.8" y="0" width="1.4" height="792" fill="#023a3a"/><rect x="502.8" y="0" width="1.4" height="792" fill="#023a3a"/><rect x="754.8" y="0" width="1.4" height="792" fill="#023a3a"/><text x="3" y="71" font-family="Liberation Serif" font-size="25.5" fill="#c9c9c9">0.9 cd m-2</text><text x="3" y="150" font-family="Liberation Serif" font-size="25.5" fill="#c9c9c9">0.8 cd m-2</text><text x="3" y="229" font-family="Liberation Serif" font-size="25.5" fill="#c9c9c9">0.7 cd m-2</text><text x="3" y="308" font-family="Liberation Serif" font-size="25.5" fill="#c9c9c9">0.6 cd m-2</text><text x="3" y="388" font-family="Liberation Serif" font-size="25.5" fill="#c9c9c9">0.5 cd m-2</text><text x="3" y="467" font-family="Liberation Serif" font-size="25.5" fill="#c9c9c9">0.4 cd m-2</text><text x="3" y="546" font-family="Liberation Serif" font-size="25.5" fill="#c9c9c9">0.3 cd m-2</text><text x="3" y="625" font-family="Liberation Serif" font-size="25.5" fill="#c9c9c9">0.2 cd m-2</text><text x="3" y="705" font-family="Liberation Serif" font-size="25.5" fill="#c9c9c9">0.1 cd m-2</text><text x="488" y="19" font-family="Liberation Sans" font-weight="bold" font-size="14.5" fill="#d2d200" text-anchor="middle">Near Black Luminance Response</text><text x="993" y="740" font-family="Liberation Sans" font-weight="bold" font-size="20" fill="#4c4c4c" text-anchor="end">hcfr.sourceforge.net</text><text x="254" y="786" font-family="Liberation Serif" font-size="25" fill="#c9c9c9">1% White</text><text x="505" y="786" font-family="Liberation Serif" font-size="25" fill="#c9c9c9">2% White</text><text x="757" y="786" font-family="Liberation Serif" font-size="25" fill="#c9c9c9">3% White</text><polyline points="3,781 229,778 459,771 687,759 917,742" fill="none" stroke="#ffff00" stroke-width="2.4"/><polyline points="3,781 229,778 459,771 687,755 917,729" fill="none" stroke="#ffffff" stroke-width="1.2" stroke-dasharray="4,3"/><rect x="224" y="773" width="10" height="10" fill="#ffff00"/><rect x="454" y="766" width="10" height="10" fill="#ffff00"/><rect x="682" y="754" width="10" height="10" fill="#ffff00"/><rect x="912" y="737" width="10" height="10" fill="#ffff00"/><rect x="224" y="773" width="10" height="10" fill="#e6e6e6"/><rect x="454" y="766" width="10" height="10" fill="#e6e6e6"/><rect x="682" y="750" width="10" height="10" fill="#e6e6e6"/><rect x="912" y="724" width="10" height="10" fill="#e6e6e6"/><rect x="0" y="775" width="6" height="12" fill="#e6e6e6"/></svg>
<svg style="left:1519px;top:554px" width="1004" height="792" viewBox="0 0 1004 792"><defs><linearGradient id="rbg" x1="0" y1="0" x2="1" y2="0"><stop offset="0" stop-color="#7c7c7c"/><stop offset="1" stop-color="#fdfdfd"/></linearGradient></defs><rect x="0" y="0" width="1004" height="792" fill="url(#rbg)"/><rect x="0" y="0" width="2" height="792" fill="#235858"/><rect x="0" y="37" width="1004" height="2" fill="#2f5a5a"/><rect x="0" y="112" width="1004" height="2" fill="#2f5a5a"/><rect x="0" y="187" width="1004" height="2" fill="#2f5a5a"/><rect x="0" y="262.5" width="1004" height="2" fill="#2f5a5a"/><rect x="0" y="338" width="1004" height="2" fill="#2f5a5a"/><rect x="0" y="413" width="1004" height="2" fill="#2f5a5a"/><rect x="0" y="488.5" width="1004" height="2" fill="#2f5a5a"/><rect x="0" y="564" width="1004" height="2" fill="#2f5a5a"/><rect x="0" y="639.5" width="1004" height="2" fill="#2f5a5a"/><rect x="0" y="715" width="1004" height="2" fill="#2f5a5a"/><rect x="165.8" y="0" width="1.4" height="792" fill="#0e4646"/><rect x="333.3" y="0" width="1.4" height="792" fill="#0e4646"/><rect x="500.8" y="0" width="1.4" height="792" fill="#0e4646"/><rect x="668.3" y="0" width="1.4" height="792" fill="#0e4646"/><rect x="835.8" y="0" width="1.4" height="792" fill="#0e4646"/><text x="2" y="30" font-family="Liberation Serif" font-size="25.5" fill="#c6c6c6">183 cd m-2</text><text x="2" y="105" font-family="Liberation Serif" font-size="25.5" fill="#c6c6c6">181 cd m-2</text><text x="2" y="180" font-family="Liberation Serif" font-size="25.5" fill="#c6c6c6">179 cd m-2</text><text x="2" y="255.5" font-family="Liberation Serif" font-size="25.5" fill="#c6c6c6">177 cd m-2</text><text x="2" y="331" font-family="Liberation Serif" font-size="25.5" fill="#c6c6c6">175 cd m-2</text><text x="2" y="406" font-family="Liberation Serif" font-size="25.5" fill="#c6c6c6">173 cd m-2</text><text x="2" y="481.5" font-family="Liberation Serif" font-size="25.5" fill="#c6c6c6">171 cd m-2</text><text x="2" y="557" font-family="Liberation Serif" font-size="25.5" fill="#c6c6c6">169 cd m-2</text><text x="2" y="632.5" font-family="Liberation Serif" font-size="25.5" fill="#c6c6c6">167 cd m-2</text><text x="2" y="708" font-family="Liberation Serif" font-size="25.5" fill="#c6c6c6">165 cd m-2</text><text x="486" y="19" font-family="Liberation Sans" font-weight="bold" font-size="14.5" fill="#6e2a78" text-anchor="middle">Near White Luminance Response</text><text x="991" y="740" font-family="Liberation Sans" font-weight="bold" font-size="20" fill="#8c8c8c" text-anchor="end">hcfr.sourceforge.net</text><text x="168.5" y="786" font-family="Liberation Serif" font-size="25" fill="#1a1a1a">95% White</text><text x="336" y="786" font-family="Liberation Serif" font-size="25" fill="#1a1a1a">96% White</text><text x="503.5" y="786" font-family="Liberation Serif" font-size="25" fill="#1a1a1a">97% White</text><text x="671" y="786" font-family="Liberation Serif" font-size="25" fill="#1a1a1a">98% White</text><text x="838.5" y="786" font-family="Liberation Serif" font-size="25" fill="#1a1a1a">99% White</text><polyline points="314,618 467,485 620,303 773,155 1001,12" fill="none" stroke="#ffff00" stroke-width="2.7"/><polyline points="314,742 467,527 620,381 773,232 1001,4" fill="none" stroke="#ececec" stroke-width="1.2" stroke-dasharray="5,4"/><rect x="308" y="612" width="12" height="12" fill="#ffff00"/><rect x="461" y="479" width="12" height="12" fill="#ffff00"/><rect x="614" y="297" width="12" height="12" fill="#ffff00"/><rect x="767" y="149" width="12" height="12" fill="#ffff00"/><rect x="309" y="737" width="10" height="10" fill="#e4e4e4"/><rect x="462" y="522" width="10" height="10" fill="#e4e4e4"/><rect x="615" y="376" width="10" height="10" fill="#e4e4e4"/><rect x="768" y="227" width="10" height="10" fill="#e4e4e4"/><rect x="999" y="2" width="6" height="12" fill="#e4e4e4"/></svg>
<div style="left:0px;top:1356px;width:2536px;height:14px;background:#f0f0f0;"></div>
<div style="left:0px;top:1357px;width:2536px;height:3px;background:#a0a0a0;"></div>
<div style="left:0px;top:1360px;width:2536px;height:1px;background:#fdfdfd;"></div>
<div style="left:0px;top:1361px;width:2536px;height:3px;background:#7a7a7a;"></div>
<div style="left:0px;top:1364px;width:2536px;height:3px;background:#b8b8b8;"></div>
<div style="left:0px;top:1367px;width:2560px;height:25px;background:#f0f0f0;"></div>
<div style="left:24px;top:1378px;width:2436px;height:3px;background:#808080;"></div>
<div style="left:0px;top:1391px;width:2560px;height:2px;background:#fdfdfd;"></div>
<div style="left:0px;top:1393px;width:2560px;height:2px;background:#404040;"></div>
<div style="left:0px;top:1395px;width:2560px;height:21px;background:#f0f0f0;"></div>
<div style="left:0px;top:1393px;width:68px;height:24px;background:#1a1a1a;"></div>
<div style="left:1px;top:1394px;width:21px;height:21px;background:#efefef;border-top:1px solid #fff;border-left:1px solid #fff;border-right:2px solid #8a8a8a;border-bottom:2px solid #8a8a8a;"></div>
<div style="left:23px;top:1394px;width:21px;height:21px;background:#efefef;border-top:1px solid #fff;border-left:1px solid #fff;border-right:2px solid #8a8a8a;border-bottom:2px solid #8a8a8a;"></div>
<div style="left:45px;top:1394px;width:21px;height:21px;background:#efefef;border-top:1px solid #fff;border-left:1px solid #fff;border-right:2px solid #8a8a8a;border-bottom:2px solid #8a8a8a;"></div>
<svg style="left:0px;top:1393px" width="68" height="23"><path d="M7 6 L16 15 M16 6 L7 15" stroke="#111" stroke-width="1.8"/><path d="M35 6 L31 10.5 L35 15 Z" fill="#111" stroke="#111" stroke-width="1"/><path d="M53 6 L57 10.5 L53 15 Z" fill="#111" stroke="#111" stroke-width="1"/></svg>
<svg style="left:0px;top:1393px" width="460" height="24" viewBox="0 0 460 24"><path d="M150 0 L161 22 L234.0 22 L243.5 0 Z" fill="#efefef"/><path d="M150 0 L161 22 M234.0 22 L243.5 0" fill="none" stroke="#1e1e1e" stroke-width="1.5"/><path d="M161 22 L234.0 22" fill="none" stroke="#777" stroke-width="1.5"/><path d="M232.5 0 L243.5 22 L299.5 22 L309 0 Z" fill="#efefef"/><path d="M232.5 0 L243.5 22 M299.5 22 L309 0" fill="none" stroke="#1e1e1e" stroke-width="1.5"/><path d="M243.5 22 L299.5 22" fill="none" stroke="#777" stroke-width="1.5"/><path d="M297 0 L308 22 L431.5 22 L441 0 Z" fill="#efefef"/><path d="M297 0 L308 22 M431.5 22 L441 0" fill="none" stroke="#1e1e1e" stroke-width="1.5"/><path d="M308 22 L431.5 22" fill="none" stroke="#777" stroke-width="1.5"/><path d="M69 -1 L79 22 L149 22 L160 -1 Z" fill="#fff"/><path d="M69 0 L79 22 L149 22 L160 0" fill="none" stroke="#1a1a1a" stroke-width="1.4"/></svg>
<div style="left:69px;top:1391px;width:91px;height:3px;background:#fff;"></div>
<div class="t" style="left:83px;top:1398px;font-size:13.5px;font-weight:bold;color:#000;">Measures</div>
<div class="t" style="left:167px;top:1399px;font-size:12px;color:#222;">Luminance</div>
<div class="t" style="left:249px;top:1399px;font-size:12px;color:#222;">Gamma</div>
<div class="t" style="left:322px;top:1399px;font-size:12px;color:#222;">Color temperature</div>
<svg style="left:2347px;top:1394px" width="20" height="20"><path d="M1 2 H17 V14 L14 18 H11 L9 15 L7 18 H4 L1 14 Z" fill="#807020" stroke="#303000" stroke-width="1"/><rect x="4" y="4" width="8" height="6" fill="#e02020"/><path d="M5 9 L11 5" stroke="#fff" stroke-width="1.2"/><rect x="12" y="12" width="5" height="4" fill="#f0e020"/></svg>
<div style="left:2467px;top:1396px;width:14px;height:15px;background:#fff;border:1px solid #555;border-right-color:#ddd;border-bottom-color:#ddd;"></div>
<div class="t" style="left:2490px;top:1396px;font-size:14px;color:#111;">Reference</div>
<div style="left:0px;top:1416px;width:2560px;height:24px;background:linear-gradient(90deg,#ecf1f9 0,#eef2fa 150px,#e2e9f4 200px,#e6ecf5 60%,#e9eef7 100%);"></div>
<div class="t" style="left:3px;top:1421px;font-size:14px;color:#111;">Ready</div>
<div style="left:2339px;top:1418px;width:91px;height:22px;border-left:1px solid #a8bcd8;border-top:1px solid #a8bcd8;"></div>
<div style="left:2435px;top:1418px;width:37px;height:22px;border-left:1px solid #a8bcd8;border-top:1px solid #a8bcd8;"></div>
<div class="t" style="left:2438px;top:1422px;font-size:15.5px;color:#111;">CAP</div>
<div style="left:2476px;top:1418px;width:39px;height:22px;border-left:1px solid #a8bcd8;border-top:1px solid #a8bcd8;"></div>
<div class="t" style="left:2479px;top:1422px;font-size:15.5px;color:#111;">NUM</div>
<div style="left:2519px;top:1418px;width:41px;height:22px;border-left:1px solid #a8bcd8;border-top:1px solid #a8bcd8;"></div>
<div style="left:0px;top:1438px;width:2560px;height:2px;background:#2a2a2a;"></div>
</body></html>
